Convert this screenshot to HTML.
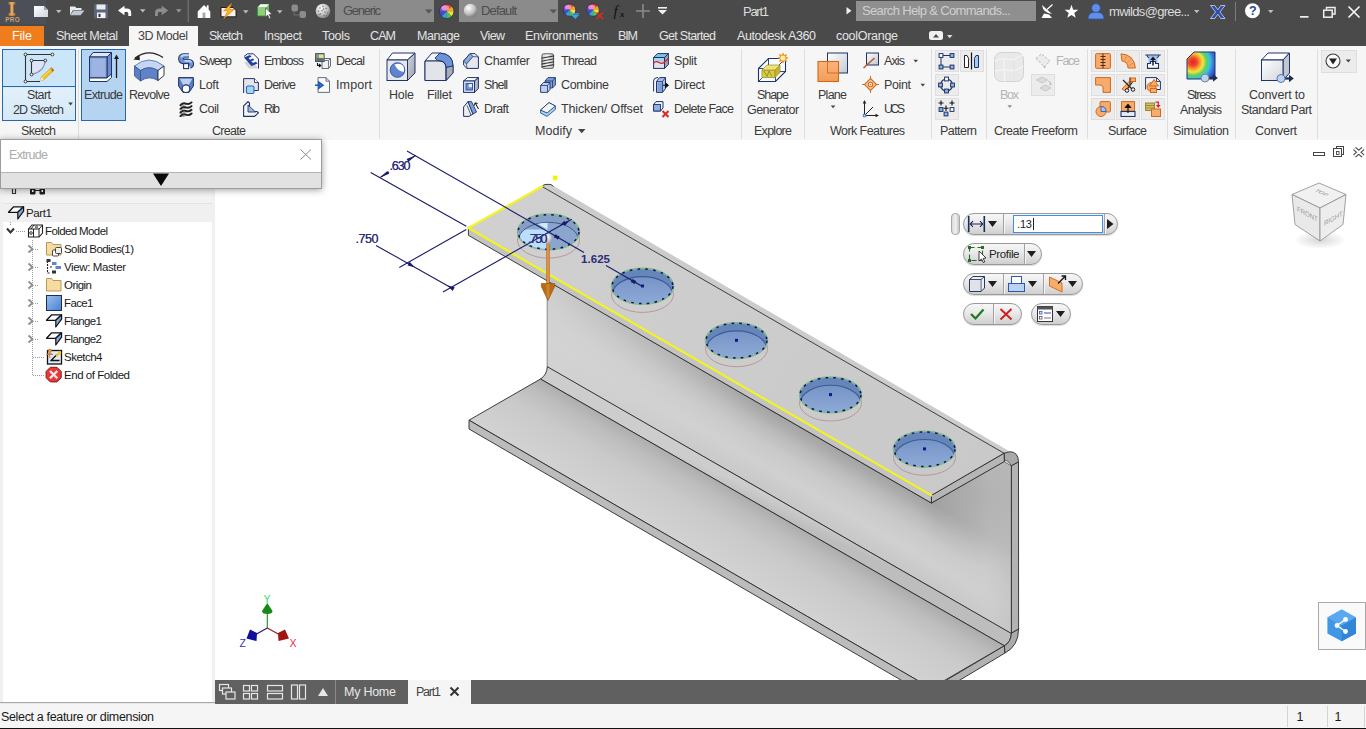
<!DOCTYPE html>
<html><head><meta charset="utf-8"><title>Autodesk Inventor - Part1</title>
<style>
html,body{margin:0;padding:0;background:#fff;}
body{width:1366px;height:729px;overflow:hidden;position:relative;font-family:"Liberation Sans",sans-serif;}
.a{position:absolute;display:block;}
.t{position:absolute;white-space:nowrap;}
</style></head><body>
<div class="a" style="left:0px;top:0px;width:1366px;height:46px;background:#4a4a4a;"></div>
<div class="a" style="left:335px;top:0px;width:99px;height:22px;background:#8b8b8b;"></div>
<div class="a" style="left:459px;top:0px;width:99px;height:22px;background:#8b8b8b;"></div>
<span class="t" style="left:343.0px;top:2.3px;font-size:13px;line-height:17px;color:#4d4d4d;letter-spacing:-1.25px;">Generic</span>
<span class="t" style="left:481.0px;top:2.3px;font-size:13px;line-height:17px;color:#4d4d4d;letter-spacing:-0.86px;">Default</span>
<span class="t" style="left:743.0px;top:2.5px;font-size:13px;line-height:17px;color:#dcdcdc;letter-spacing:-1.27px;">Part1</span>
<div class="a" style="left:856px;top:1px;width:180px;height:20px;background:#8f8f8f;"></div>
<span class="t" style="left:862.0px;top:2.1px;font-size:13px;line-height:17px;color:#cfcfcf;letter-spacing:-0.66px;">Search Help &amp; Commands...</span>
<span class="t" style="left:1109.0px;top:2.5px;font-size:13px;line-height:17px;color:#dcdcdc;letter-spacing:-0.68px;">mwilds@gree...</span>
<svg class="a" style="left:0px;top:0px;" width="1366" height="46" viewBox="0 0 1366 46"><defs>
<linearGradient id="gDoc" x1="0" y1="0" x2="1" y2="1"><stop offset="0" stop-color="#ffffff"/><stop offset="1" stop-color="#cfd3dc"/></linearGradient>
<linearGradient id="gLogo" x1="0" y1="0" x2="1" y2="0"><stop offset="0" stop-color="#b8722c"/><stop offset="0.5" stop-color="#f0b060"/><stop offset="1" stop-color="#b06a28"/></linearGradient>
<radialGradient id="gSph" cx="0.35" cy="0.3" r="0.8"><stop offset="0" stop-color="#ffffff"/><stop offset="0.6" stop-color="#bdbdbd"/><stop offset="1" stop-color="#6a6a6a"/></radialGradient>
</defs>
<rect x="0" y="0" width="46" height="24" fill="#4c4f58"/>
<path d="M8.500,2 H15.300 V4.500 H13.500 V13 H15.300 V15.800 H8.500 V13 H10.300 V4.500 H8.500 Z" fill="url(#gLogo)"/>
<text x="5.300" y="22.200" font-size="6.400" font-weight="bold" fill="#c9a468" font-family="Liberation Sans,sans-serif" letter-spacing="0.300">PRO</text>
<path d="M34,6 H44 L48,10 V17 H34 Z" fill="url(#gDoc)"/><path d="M44,6 L48,10 H44 Z" fill="#9aa0ae"/>
<polygon points="56,10 61.5,10 58.75,13.3" fill="#bdbdbd"/>
<path d="M70,6.500 H75 L76.500,8 H81.500 V10 H73 L70,15 Z" fill="#e8ebf0"/><path d="M73.500,10.500 H84.500 L80.500,15.300 H70.300 Z" fill="#c3c8d2"/>
<rect x="94" y="4" width="14" height="14.500" rx="1" fill="#5b6478"/><rect x="96.500" y="4.500" width="9" height="5" fill="#e9ebf0"/><rect x="97" y="12.500" width="8.500" height="5.500" fill="#f4f4f6"/><rect x="98.500" y="13.800" width="2" height="3.200" fill="#2c3344"/>
<path d="M118,10.500 L124.500,5.800 V8.600 H126.500 Q131.200,8.600 131.200,13 V16 H128.300 V13.400 Q128.300,12 126.500,12 H124.500 V15.200 Z" fill="#ffffff"/>
<polygon points="140,9.2 145.5,9.2 142.75,12.5" fill="#bdbdbd"/>
<path d="M168.200,10.500 L161.700,5.800 V8.600 H159.700 Q155,8.600 155,13 V16 H157.900 V13.400 Q157.900,12 159.700,12 H161.700 V15.200 Z" fill="#8c8c8c"/>
<polygon points="176,9.2 181.5,9.2 178.75,12.5" fill="#9a9a9a"/>
<rect x="187.700" y="0" width="1" height="22" fill="#7c7c7c"/>
<path d="M197.700,11.500 L204,5 L206.800,7.800 V5.200 H208.600 V9.600 L210.300,11.500 V18 H197.700 Z" fill="#ffffff"/><rect x="202.600" y="12.600" width="2.800" height="5.400" fill="#a8a8a8"/>
<path d="M221,7.500 H233 L236,10.500 V16.800 H221 Z" fill="#fdf1ee" stroke="#111" stroke-width="0.900"/><path d="M231.500,3.500 L223.500,10.800 H228 L223.800,18.500 L234.200,9.500 H229.200 Z" fill="#f6b928" stroke="#d88412" stroke-width="0.700"/>
<polygon points="243,10.3 248.5,10.3 245.75,13.6" fill="#bdbdbd"/>
<path d="M257.500,7.500 L260.500,4.300 H269 V13 L266,16 H257.500 Z" fill="#6dbb5a"/><path d="M257.500,7.500 H266 V16 H257.500 Z" fill="#8fd07c" stroke="#2e8a2e" stroke-width="0.800"/><path d="M260.500,4.300 H269 L266,7.500 H257.500 Z" fill="#f2fbef"/><path d="M265.500,8 V17 L267.700,15 L269.300,18.700 L270.800,18 L269.200,14.500 L272,14.300 Z" fill="#fff" stroke="#333" stroke-width="0.500"/>
<polygon points="277,10.3 282.5,10.3 279.75,13.6" fill="#bdbdbd"/>
<rect x="291.500" y="4.500" width="6.500" height="7" rx="2" fill="#8b8b8b"/><rect x="299.500" y="11" width="6.500" height="7" rx="2" fill="#8b8b8b"/><path d="M294,11.500 V15 H299.500" stroke="#6e6e6e" stroke-width="1" fill="none"/>
<circle cx="323" cy="11" r="7.300" fill="url(#gSph)"/>
<circle cx="320" cy="8" r="0.750" fill="#777"/>
<circle cx="323" cy="6.5" r="0.750" fill="#777"/>
<circle cx="326" cy="8.5" r="0.750" fill="#777"/>
<circle cx="318.5" cy="11" r="0.750" fill="#777"/>
<circle cx="322" cy="10.5" r="0.750" fill="#777"/>
<circle cx="325" cy="12" r="0.750" fill="#777"/>
<circle cx="327.5" cy="13" r="0.750" fill="#777"/>
<circle cx="320.5" cy="14" r="0.750" fill="#777"/>
<circle cx="324" cy="15.5" r="0.750" fill="#777"/>
<circle cx="326.5" cy="15.5" r="0.750" fill="#777"/>
<circle cx="319" cy="14.5" r="0.750" fill="#777"/>
<circle cx="323.5" cy="9" r="0.750" fill="#777"/>
<polygon points="425,9.500 432.500,9.500 428.750,13.500" fill="#565656"/>
<polygon points="549.500,9.500 557,9.500 553.250,13.500" fill="#565656"/>
<path d="M446.70,11.30 L446.70,4.00 A7.3,7.3 0 0 1 451.86,6.14 Z" fill="#e8432e"/><path d="M446.70,11.30 L451.86,6.14 A7.3,7.3 0 0 1 454.00,11.30 Z" fill="#f2a32c"/><path d="M446.70,11.30 L454.00,11.30 A7.3,7.3 0 0 1 451.86,16.46 Z" fill="#f0e040"/><path d="M446.70,11.30 L451.86,16.46 A7.3,7.3 0 0 1 446.70,18.60 Z" fill="#58c050"/><path d="M446.70,11.30 L446.70,18.60 A7.3,7.3 0 0 1 441.54,16.46 Z" fill="#3aa0e0"/><path d="M446.70,11.30 L441.54,16.46 A7.3,7.3 0 0 1 439.40,11.30 Z" fill="#3d4fd0"/><path d="M446.70,11.30 L439.40,11.30 A7.3,7.3 0 0 1 441.54,6.14 Z" fill="#9a3fd0"/><path d="M446.70,11.30 L441.54,6.14 A7.3,7.3 0 0 1 446.70,4.00 Z" fill="#e040a0"/><circle cx="446.7" cy="11.3" r="7.3" fill="none" stroke="#2e2e4e" stroke-width="0.800"/><ellipse cx="445.24" cy="8.015" rx="4.015" ry="2.555" fill="#fff" opacity="0.450"/>
<circle cx="470.500" cy="10.500" r="6.700" fill="url(#gSph)"/>
<path d="M569.50,10.00 L569.50,3.70 A6.3,6.3 0 0 1 573.95,5.55 Z" fill="#e8432e"/><path d="M569.50,10.00 L573.95,5.55 A6.3,6.3 0 0 1 575.80,10.00 Z" fill="#f2a32c"/><path d="M569.50,10.00 L575.80,10.00 A6.3,6.3 0 0 1 573.95,14.45 Z" fill="#f0e040"/><path d="M569.50,10.00 L573.95,14.45 A6.3,6.3 0 0 1 569.50,16.30 Z" fill="#58c050"/><path d="M569.50,10.00 L569.50,16.30 A6.3,6.3 0 0 1 565.05,14.45 Z" fill="#3aa0e0"/><path d="M569.50,10.00 L565.05,14.45 A6.3,6.3 0 0 1 563.20,10.00 Z" fill="#3d4fd0"/><path d="M569.50,10.00 L563.20,10.00 A6.3,6.3 0 0 1 565.05,5.55 Z" fill="#9a3fd0"/><path d="M569.50,10.00 L565.05,5.55 A6.3,6.3 0 0 1 569.50,3.70 Z" fill="#e040a0"/><circle cx="569.5" cy="10" r="6.3" fill="none" stroke="#2e2e4e" stroke-width="0.800"/><ellipse cx="568.24" cy="7.165" rx="3.465" ry="2.205" fill="#fff" opacity="0.450"/>
<polygon points="571.500,15 579,15 575.250,19" fill="#38a8f0"/><rect x="571.500" y="13.300" width="7.500" height="1.200" fill="#38a8f0"/>
<path d="M593.00,10.00 L593.00,3.70 A6.3,6.3 0 0 1 597.45,5.55 Z" fill="#e8432e"/><path d="M593.00,10.00 L597.45,5.55 A6.3,6.3 0 0 1 599.30,10.00 Z" fill="#f2a32c"/><path d="M593.00,10.00 L599.30,10.00 A6.3,6.3 0 0 1 597.45,14.45 Z" fill="#f0e040"/><path d="M593.00,10.00 L597.45,14.45 A6.3,6.3 0 0 1 593.00,16.30 Z" fill="#58c050"/><path d="M593.00,10.00 L593.00,16.30 A6.3,6.3 0 0 1 588.55,14.45 Z" fill="#3aa0e0"/><path d="M593.00,10.00 L588.55,14.45 A6.3,6.3 0 0 1 586.70,10.00 Z" fill="#3d4fd0"/><path d="M593.00,10.00 L586.70,10.00 A6.3,6.3 0 0 1 588.55,5.55 Z" fill="#9a3fd0"/><path d="M593.00,10.00 L588.55,5.55 A6.3,6.3 0 0 1 593.00,3.70 Z" fill="#e040a0"/><circle cx="593" cy="10" r="6.3" fill="none" stroke="#2e2e4e" stroke-width="0.800"/><ellipse cx="591.74" cy="7.165" rx="3.465" ry="2.205" fill="#fff" opacity="0.450"/>
<path d="M596.500,12.500 L603,19 M603,12.500 L596.500,19" stroke="#e8281c" stroke-width="1.500"/>
<text x="613.500" y="15.500" font-size="15" font-style="italic" font-family="Liberation Serif,serif" fill="#111">f</text><text x="620" y="17" font-size="9" font-style="italic" font-weight="bold" font-family="Liberation Serif,serif" fill="#111">x</text>
<path d="M643,4 V18 M636,11 H650" stroke="#8a8a8a" stroke-width="1.600"/>
<rect x="658" y="7" width="9" height="1.600" fill="#f0f0f0"/><polygon points="658,10 667,10 662.500,14.500" fill="#f0f0f0"/>
<polygon points="846.500,7 851.500,10.800 846.500,14.500" fill="#f0f0f0"/>
<path d="M1042,5 Q1043,13 1052,14 Z" fill="#fff"/><path d="M1047,9.500 L1052.500,4.500" stroke="#fff" stroke-width="1.200"/><path d="M1044,13.500 L1041.500,18 H1052 L1049,14.500" fill="#fff"/>
<polygon points="1071.50,4.80 1073.20,9.65 1078.35,9.78 1074.26,12.90 1075.73,17.82 1071.50,14.90 1067.27,17.82 1068.74,12.90 1064.65,9.78 1069.80,9.65" fill="#ffffff"/>
<circle cx="1096" cy="8" r="4.300" fill="#5f8fe6" stroke="#2f55b0" stroke-width="0.700"/><path d="M1088,19 Q1088.500,12.500 1093.500,12.500 H1098.500 Q1103.500,12.500 1104,19 Z" fill="#5f8fe6" stroke="#2f55b0" stroke-width="0.700"/>
<polygon points="1194,10 1199.5,10 1196.75,13.3" fill="#bdbdbd"/>
<path d="M1210.500,5.500 H1214.800 L1217.800,9.800 L1220.800,5.500 H1225 L1220,12 L1225,18.500 H1220.800 L1217.800,14.200 L1214.800,18.500 H1210.500 L1215.600,12 Z" fill="#2f4fa8" stroke="#c9d8f4" stroke-width="0.800"/>
<rect x="1235" y="2" width="1" height="19" fill="#7c7c7c"/>
<circle cx="1252.500" cy="10.700" r="7.500" fill="#ffffff"/><text x="1249" y="15.300" font-size="12.500" font-weight="bold" font-family="Liberation Sans,sans-serif" fill="#2a3f9a">?</text>
<polygon points="1268,10 1273.5,10 1270.75,13.3" fill="#bdbdbd"/>
<rect x="1300" y="16" width="8.500" height="1.700" fill="#f0f0f0"/>
<path d="M1326.500,9.500 V7.500 H1335 V14 H1332.500" fill="none" stroke="#f0f0f0" stroke-width="1.500"/><rect x="1323.700" y="10.200" width="8.500" height="7" fill="none" stroke="#f0f0f0" stroke-width="1.500"/>
<path d="M1348.500,6.500 L1359.500,17.500 M1359.500,6.500 L1348.500,17.500" stroke="#f4f4f4" stroke-width="1.700"/>
<rect x="929" y="31" width="14" height="9" rx="2.500" fill="#f0f0f0"/><polygon points="933,37.500 939,37.500 936,34" fill="#4a4a4a"/><polygon points="947,35 952.500,35 949.750,38.300" fill="#e0e0e0"/></svg>
<div class="a" style="left:0px;top:26px;width:44px;height:20px;background:#f07d1c;"></div>
<div class="a" style="left:129px;top:26px;width:69px;height:21px;background:#f6f6f6;"></div>
<span class="t" style="left:12.0px;top:28.2px;font-size:12.5px;line-height:16px;color:#fff;letter-spacing:-0.05px;">File</span>
<span class="t" style="left:56.0px;top:28.2px;font-size:12.5px;line-height:16px;color:#e4e4e4;letter-spacing:-0.47px;">Sheet Metal</span>
<span class="t" style="left:138.0px;top:28.2px;font-size:12.5px;line-height:16px;color:#444;letter-spacing:-0.50px;">3D Model</span>
<span class="t" style="left:209.0px;top:28.2px;font-size:12.5px;line-height:16px;color:#e4e4e4;letter-spacing:-0.84px;">Sketch</span>
<span class="t" style="left:264.0px;top:28.2px;font-size:12.5px;line-height:16px;color:#e4e4e4;letter-spacing:-0.38px;">Inspect</span>
<span class="t" style="left:322.0px;top:28.2px;font-size:12.5px;line-height:16px;color:#e4e4e4;letter-spacing:-0.29px;">Tools</span>
<span class="t" style="left:370.0px;top:28.2px;font-size:12.5px;line-height:16px;color:#e4e4e4;letter-spacing:-0.89px;">CAM</span>
<span class="t" style="left:417.0px;top:28.2px;font-size:12.5px;line-height:16px;color:#e4e4e4;letter-spacing:-0.43px;">Manage</span>
<span class="t" style="left:480.0px;top:28.2px;font-size:12.5px;line-height:16px;color:#e4e4e4;letter-spacing:-0.62px;">View</span>
<span class="t" style="left:525.0px;top:28.2px;font-size:12.5px;line-height:16px;color:#e4e4e4;letter-spacing:-0.31px;">Environments</span>
<span class="t" style="left:618.0px;top:28.2px;font-size:12.5px;line-height:16px;color:#e4e4e4;letter-spacing:-1.11px;">BIM</span>
<span class="t" style="left:659.0px;top:28.2px;font-size:12.5px;line-height:16px;color:#e4e4e4;letter-spacing:-0.69px;">Get Started</span>
<span class="t" style="left:737.0px;top:28.2px;font-size:12.5px;line-height:16px;color:#e4e4e4;letter-spacing:-0.42px;">Autodesk A360</span>
<span class="t" style="left:836.0px;top:28.2px;font-size:12.5px;line-height:16px;color:#e4e4e4;letter-spacing:-0.29px;">coolOrange</span>
<div class="a" style="left:0px;top:46px;width:1366px;height:94px;background:#f6f6f6;"></div>
<div class="a" style="left:78px;top:49px;width:1px;height:90px;background:#dedede;"></div>
<div class="a" style="left:379px;top:49px;width:1px;height:90px;background:#dedede;"></div>
<div class="a" style="left:741px;top:49px;width:1px;height:90px;background:#dedede;"></div>
<div class="a" style="left:804px;top:49px;width:1px;height:90px;background:#dedede;"></div>
<div class="a" style="left:931px;top:49px;width:1px;height:90px;background:#dedede;"></div>
<div class="a" style="left:986px;top:49px;width:1px;height:90px;background:#dedede;"></div>
<div class="a" style="left:1087px;top:49px;width:1px;height:90px;background:#dedede;"></div>
<div class="a" style="left:1167px;top:49px;width:1px;height:90px;background:#dedede;"></div>
<div class="a" style="left:1235px;top:49px;width:1px;height:90px;background:#dedede;"></div>
<div class="a" style="left:1317px;top:49px;width:1px;height:90px;background:#dedede;"></div>
<div class="a" style="left:2px;top:49px;width:74px;height:72px;background:linear-gradient(#cbe5f9 0,#cbe5f9 37px,#e3f0fb 38px,#d4e8f8 100%);border:1px solid #2768ac;box-sizing:border-box;"></div>
<div class="a" style="left:3px;top:86px;width:72px;height:1px;background:#2768ac;"></div>
<div class="a" style="left:81px;top:49px;width:45px;height:72px;background:#b5d4f1;border:1px solid #2768ac;box-sizing:border-box;"></div>
<span class="t" style="left:199.0px;top:53.2px;font-size:12.5px;line-height:16px;color:#3a3a3a;letter-spacing:-1.30px;">Sweep</span>
<span class="t" style="left:199.0px;top:77.2px;font-size:12.5px;line-height:16px;color:#3a3a3a;letter-spacing:-0.28px;">Loft</span>
<span class="t" style="left:199.0px;top:101.2px;font-size:12.5px;line-height:16px;color:#3a3a3a;letter-spacing:-0.51px;">Coil</span>
<span class="t" style="left:264.0px;top:53.2px;font-size:12.5px;line-height:16px;color:#3a3a3a;letter-spacing:-1.03px;">Emboss</span>
<span class="t" style="left:264.0px;top:77.2px;font-size:12.5px;line-height:16px;color:#3a3a3a;letter-spacing:-0.82px;">Derive</span>
<span class="t" style="left:264.0px;top:101.2px;font-size:12.5px;line-height:16px;color:#3a3a3a;letter-spacing:-1.38px;">Rib</span>
<span class="t" style="left:336.0px;top:53.2px;font-size:12.5px;line-height:16px;color:#3a3a3a;letter-spacing:-0.74px;">Decal</span>
<span class="t" style="left:336.0px;top:77.2px;font-size:12.5px;line-height:16px;color:#3a3a3a;letter-spacing:0.12px;">Import</span>
<span class="t" style="left:484.0px;top:53.2px;font-size:12.5px;line-height:16px;color:#3a3a3a;letter-spacing:-0.32px;">Chamfer</span>
<span class="t" style="left:484.0px;top:77.2px;font-size:12.5px;line-height:16px;color:#3a3a3a;letter-spacing:-0.95px;">Shell</span>
<span class="t" style="left:484.0px;top:101.2px;font-size:12.5px;line-height:16px;color:#3a3a3a;letter-spacing:-0.52px;">Draft</span>
<span class="t" style="left:561.0px;top:53.2px;font-size:12.5px;line-height:16px;color:#3a3a3a;letter-spacing:-0.72px;">Thread</span>
<span class="t" style="left:561.0px;top:77.2px;font-size:12.5px;line-height:16px;color:#3a3a3a;letter-spacing:-0.34px;">Combine</span>
<span class="t" style="left:561.0px;top:101.2px;font-size:12.5px;line-height:16px;color:#3a3a3a;letter-spacing:-0.13px;">Thicken/ Offset</span>
<span class="t" style="left:674.0px;top:53.2px;font-size:12.5px;line-height:16px;color:#3a3a3a;letter-spacing:-0.33px;">Split</span>
<span class="t" style="left:674.0px;top:77.2px;font-size:12.5px;line-height:16px;color:#3a3a3a;letter-spacing:-0.33px;">Direct</span>
<span class="t" style="left:674.0px;top:101.2px;font-size:12.5px;line-height:16px;color:#3a3a3a;letter-spacing:-0.74px;">Delete Face</span>
<span class="t" style="left:884.0px;top:53.2px;font-size:12.5px;line-height:16px;color:#3a3a3a;letter-spacing:-0.87px;">Axis</span>
<span class="t" style="left:884.0px;top:77.2px;font-size:12.5px;line-height:16px;color:#3a3a3a;letter-spacing:-0.37px;">Point</span>
<span class="t" style="left:884.0px;top:101.2px;font-size:12.5px;line-height:16px;color:#3a3a3a;letter-spacing:-2.70px;">UCS</span>
<span class="t" style="left:1056.0px;top:53.2px;font-size:12.5px;line-height:16px;color:#b4b4b4;letter-spacing:-1.26px;">Face</span>
<span class="t" style="left:84.0px;top:87.2px;font-size:12.5px;line-height:16px;color:#3a3a3a;letter-spacing:-0.68px;">Extrude</span>
<span class="t" style="left:129.0px;top:87.2px;font-size:12.5px;line-height:16px;color:#3a3a3a;letter-spacing:-0.69px;">Revolve</span>
<span class="t" style="left:389.0px;top:87.2px;font-size:12.5px;line-height:16px;color:#3a3a3a;letter-spacing:-0.24px;">Hole</span>
<span class="t" style="left:427.0px;top:87.2px;font-size:12.5px;line-height:16px;color:#3a3a3a;letter-spacing:-0.28px;">Fillet</span>
<span class="t" style="left:27.0px;top:87.2px;font-size:12.5px;line-height:16px;color:#3a3a3a;letter-spacing:-0.60px;">Start</span>
<span class="t" style="left:13.0px;top:102.2px;font-size:12.5px;line-height:16px;color:#3a3a3a;letter-spacing:-0.83px;">2D Sketch</span>
<span class="t" style="left:757.0px;top:87.2px;font-size:12.5px;line-height:16px;color:#3a3a3a;letter-spacing:-1.04px;">Shape</span>
<span class="t" style="left:747.0px;top:102.2px;font-size:12.5px;line-height:16px;color:#3a3a3a;letter-spacing:-0.53px;">Generator</span>
<span class="t" style="left:818.0px;top:87.2px;font-size:12.5px;line-height:16px;color:#3a3a3a;letter-spacing:-0.74px;">Plane</span>
<span class="t" style="left:1187.0px;top:87.2px;font-size:12.5px;line-height:16px;color:#3a3a3a;letter-spacing:-1.28px;">Stress</span>
<span class="t" style="left:1180.0px;top:102.2px;font-size:12.5px;line-height:16px;color:#3a3a3a;letter-spacing:-0.65px;">Analysis</span>
<span class="t" style="left:1249.0px;top:87.2px;font-size:12.5px;line-height:16px;color:#3a3a3a;letter-spacing:-0.19px;">Convert to</span>
<span class="t" style="left:1241.0px;top:102.2px;font-size:12.5px;line-height:16px;color:#3a3a3a;letter-spacing:-0.51px;">Standard Part</span>
<span class="t" style="left:1000.0px;top:87.2px;font-size:12.5px;line-height:16px;color:#b4b4b4;letter-spacing:-1.27px;">Box</span>
<span class="t" style="left:21.0px;top:123.2px;font-size:12.5px;line-height:16px;color:#3a3a3a;letter-spacing:-0.64px;">Sketch</span>
<span class="t" style="left:212.0px;top:123.2px;font-size:12.5px;line-height:16px;color:#3a3a3a;letter-spacing:-0.70px;">Create</span>
<span class="t" style="left:535.0px;top:123.2px;font-size:12.5px;line-height:16px;color:#3a3a3a;letter-spacing:0.04px;">Modify</span>
<span class="t" style="left:754.0px;top:123.2px;font-size:12.5px;line-height:16px;color:#3a3a3a;letter-spacing:-0.73px;">Explore</span>
<span class="t" style="left:830.0px;top:123.2px;font-size:12.5px;line-height:16px;color:#3a3a3a;letter-spacing:-0.56px;">Work Features</span>
<span class="t" style="left:940.0px;top:123.2px;font-size:12.5px;line-height:16px;color:#3a3a3a;letter-spacing:-0.55px;">Pattern</span>
<span class="t" style="left:994.0px;top:123.2px;font-size:12.5px;line-height:16px;color:#3a3a3a;letter-spacing:-0.55px;">Create Freeform</span>
<span class="t" style="left:1108.0px;top:123.2px;font-size:12.5px;line-height:16px;color:#3a3a3a;letter-spacing:-0.68px;">Surface</span>
<span class="t" style="left:1173.0px;top:123.2px;font-size:12.5px;line-height:16px;color:#3a3a3a;letter-spacing:-0.26px;">Simulation</span>
<span class="t" style="left:1255.0px;top:123.2px;font-size:12.5px;line-height:16px;color:#3a3a3a;letter-spacing:-0.29px;">Convert</span>
<div class="a" style="left:935px;top:50px;width:24px;height:22px;background:#ececec;border:1px solid #dedede;box-sizing:border-box;"></div>
<div class="a" style="left:960px;top:50px;width:24px;height:22px;background:#ececec;border:1px solid #dedede;box-sizing:border-box;"></div>
<div class="a" style="left:935px;top:74px;width:24px;height:22px;background:#ececec;border:1px solid #dedede;box-sizing:border-box;"></div>
<div class="a" style="left:935px;top:98px;width:24px;height:22px;background:#ececec;border:1px solid #dedede;box-sizing:border-box;"></div>
<div class="a" style="left:1031px;top:74px;width:24px;height:22px;background:#ececec;border:1px solid #dedede;box-sizing:border-box;"></div>
<div class="a" style="left:1091px;top:50px;width:24px;height:22px;background:#ececec;border:1px solid #dedede;box-sizing:border-box;"></div>
<div class="a" style="left:1091px;top:74px;width:24px;height:22px;background:#ececec;border:1px solid #dedede;box-sizing:border-box;"></div>
<div class="a" style="left:1091px;top:98px;width:24px;height:22px;background:#ececec;border:1px solid #dedede;box-sizing:border-box;"></div>
<div class="a" style="left:1116px;top:50px;width:24px;height:22px;background:#ececec;border:1px solid #dedede;box-sizing:border-box;"></div>
<div class="a" style="left:1116px;top:74px;width:24px;height:22px;background:#ececec;border:1px solid #dedede;box-sizing:border-box;"></div>
<div class="a" style="left:1116px;top:98px;width:24px;height:22px;background:#ececec;border:1px solid #dedede;box-sizing:border-box;"></div>
<div class="a" style="left:1141px;top:50px;width:24px;height:22px;background:#ececec;border:1px solid #dedede;box-sizing:border-box;"></div>
<div class="a" style="left:1141px;top:74px;width:24px;height:22px;background:#ececec;border:1px solid #dedede;box-sizing:border-box;"></div>
<div class="a" style="left:1141px;top:98px;width:24px;height:22px;background:#ececec;border:1px solid #dedede;box-sizing:border-box;"></div>
<div class="a" style="left:1321px;top:50px;width:36px;height:23px;background:#ececec;border:1px solid #dedede;box-sizing:border-box;"></div>
<svg class="a" style="left:22px;top:50px;" width="36" height="36" viewBox="0 0 36 36"><path d="M30.400,4.500 H3.500 V31.500 H18" fill="none" stroke="#333" stroke-width="1.100"/><path d="M9.500,10.500 H23.300 Q22,22 9.500,24.500 Z" fill="#dfe2f6" stroke="none"/><path d="M23.300,10.500 H9.500 V24.500" fill="none" stroke="#333" stroke-width="1.100"/><path d="M23.300,10.500 Q22,22 9.500,24.500" fill="none" stroke="#7d8cb4" stroke-width="1.100"/><circle cx="3.5" cy="4.5" r="1.400" fill="#fff" stroke="#222" stroke-width="0.900"/><circle cx="30.4" cy="4.5" r="1.400" fill="#fff" stroke="#222" stroke-width="0.900"/><circle cx="3.5" cy="31.5" r="1.400" fill="#fff" stroke="#222" stroke-width="0.900"/><circle cx="9.5" cy="10.5" r="1.400" fill="#fff" stroke="#222" stroke-width="0.900"/><circle cx="23.3" cy="10.5" r="1.400" fill="#fff" stroke="#222" stroke-width="0.900"/><circle cx="9.5" cy="24.5" r="1.400" fill="#fff" stroke="#222" stroke-width="0.900"/><path d="M18,31 L19.200,27 L29.500,17.500 L32,20.300 L21.800,29.800 Z" fill="#f5c020" stroke="#c08a10" stroke-width="0.500"/><path d="M18,31 L19.200,27 L21.800,29.800 Z" fill="#f4e8d0"/><path d="M28,19 L29.500,17.500 L32,20.300 L30.500,21.700 Z" fill="#b06a20"/><path d="M20,27.800 L30,18.600" stroke="#fbe07a" stroke-width="1"/></svg>
<svg class="a" style="left:66px;top:101px;" width="8" height="5" viewBox="0 0 8 5"><polygon points="2.3,1.6 6.9,1.6 4.6,4.4" fill="#444"/></svg>
<svg class="a" style="left:86px;top:50px;" width="36" height="34" viewBox="0 0 36 34"><polygon points="3.500,7 7,2.500 25.500,2.500 21,7" fill="#dfe8f8" stroke="#1f3468" stroke-width="1"/><polygon points="21,7 25.500,2.500 25.500,24 21,28" fill="#6f8bd0" stroke="#1f3468" stroke-width="1"/><rect x="3.500" y="7" width="17.500" height="21" fill="#8fa8dc" stroke="#1f3468" stroke-width="1"/><polygon points="3.500,28 21,28 25.500,24 25.500,27.500 21,31.500 3.500,31.500" fill="#fff" stroke="#1f3468" stroke-width="1"/><rect x="5.500" y="9" width="13.500" height="17.500" fill="#9db3e2"/><path d="M30.500,28 V7" stroke="#1a1a1a" stroke-width="1.300"/><polygon points="30.500,4.500 33,9 28,9" fill="#1a1a1a"/></svg>
<svg class="a" style="left:131px;top:50px;" width="36" height="34" viewBox="0 0 36 34"><path d="M32,7.500 Q18,-2 4,8" fill="none" stroke="#222" stroke-width="1.300"/><polygon points="2.300,9.500 8.500,5 8.800,10.300" fill="#222"/><path d="M3.500,16 Q18,4 33,16 L27,20.500 Q18,15 9.500,20.500 Z" fill="#c4d6f2" stroke="#4a68a8" stroke-width="0.800"/><path d="M3.500,16 L9.500,20.500 V31 L3.500,26 Z" fill="#5a7ec4" stroke="#36508c" stroke-width="0.800"/><path d="M9.500,20.500 Q18,15 27,20.500 V30.500 Q18,25 9.500,31 Z" fill="#5f82c8" stroke="#36508c" stroke-width="0.800"/><path d="M27,20.500 L33,16 V25.500 L27,30.500 Z" fill="#fff" stroke="#222" stroke-width="0.900"/></svg>
<svg class="a" style="left:177.5px;top:52.5px;" width="16" height="17" viewBox="0 0 16 17"><path d="M10.800,2.900 H6.500 Q2.800,2.900 2.800,5.800 Q2.800,8.600 6.500,8.600 H10 Q13.400,8.600 13.400,11 Q13.400,12.600 11.800,13.200" fill="none" stroke="#1f3468" stroke-width="5.400" stroke-linecap="butt"/><path d="M10.800,2.900 H6.500 Q2.800,2.900 2.800,5.800 Q2.800,8.600 6.500,8.600 H10 Q13.400,8.600 13.400,11 Q13.400,12.600 11.800,13.200" fill="none" stroke="#6f90d4" stroke-width="3.600" stroke-linecap="butt"/><path d="M10.800,2.200 H6.500 Q3.600,2.200 3.400,4.500 M6.500,7.900 H10 Q12.800,7.900 13.200,9.500" fill="none" stroke="#c0d4f4" stroke-width="1.700"/><rect x="5.600" y="10.600" width="5" height="5" fill="#fff" stroke="#1f3468" stroke-width="1.100"/></svg>
<svg class="a" style="left:178px;top:77px;" width="16" height="16" viewBox="0 0 16 16"><path d="M0.600,0.600 H15.400 V9 L11,15.400 H5 L0.600,9 Z" fill="#5a7ec4" stroke="#1f3468" stroke-width="1"/><path d="M1.800,1.800 H14.200 L10,9.500 H6 Z" fill="#bcd0f2"/><circle cx="8" cy="11.700" r="3.800" fill="#fff" stroke="#1f3468" stroke-width="1.100"/></svg>
<svg class="a" style="left:179px;top:101px;" width="14" height="16" viewBox="0 0 14 16"><path d="M12.600,1.4 L1.400,5.4" fill="none" stroke="#9a9a9a" stroke-width="1"/><path d="M12.600,5.1 L1.400,9.1" fill="none" stroke="#9a9a9a" stroke-width="1"/><path d="M12.600,8.8 L1.400,12.8" fill="none" stroke="#9a9a9a" stroke-width="1"/><path d="M12.600,12.5 L1.400,16.5" fill="none" stroke="#9a9a9a" stroke-width="1"/><path d="M1.400,4.1 Q4,1.4 7,2.6 T12.600,1.4" fill="none" stroke="#242424" stroke-width="1.900" stroke-linecap="round"/><path d="M1.400,7.8 Q4,5.1 7,6.3 T12.600,5.1" fill="none" stroke="#242424" stroke-width="1.900" stroke-linecap="round"/><path d="M1.400,11.5 Q4,8.8 7,10 T12.600,8.8" fill="none" stroke="#242424" stroke-width="1.900" stroke-linecap="round"/><path d="M1.400,15.2 Q4,12.5 7,13.7 T12.600,12.5" fill="none" stroke="#242424" stroke-width="1.900" stroke-linecap="round"/></svg>
<svg class="a" style="left:243px;top:53px;" width="16" height="16" viewBox="0 0 16 16"><path d="M1,9 H10 L15.500,15.500 H6 Z" fill="#c9c9cc" opacity="0.800"/><path d="M1,3.500 L4.500,0.800 H10.500 L15.500,6 V15.500" fill="none" stroke="#1f3468" stroke-width="1"/><path d="M1,4.500 L7,2 L8.500,3.700 L5.500,5 L7,6.700 L10,5.500 L11.300,7 L8.300,8.300 L9.800,10 L13,8.700 L14.500,10.500 L8.500,13 Z" fill="#1e3f9c"/></svg>
<svg class="a" style="left:243px;top:78px;" width="16" height="16" viewBox="0 0 16 16"><path d="M0.600,15 V0.600 H11.500 L15.400,4.500 V12.500 H11" fill="#e4e5ea" stroke="#1f3468" stroke-width="1"/><path d="M11.500,0.600 V4.500 H15.400" fill="#fff" stroke="#1f3468" stroke-width="0.900"/><rect x="3.500" y="8" width="7.500" height="7.500" rx="1.500" fill="#a6d4ee" stroke="#2f68b8" stroke-width="1.100"/></svg>
<svg class="a" style="left:243px;top:101px;" width="16" height="16" viewBox="0 0 16 16"><path d="M0.600,15.400 V5 L5,0.600 L6.500,2 V10.500 L14,10.500 L15.400,11.800 L11.500,15.400 Z" fill="#f4f5f9" stroke="#1f3468" stroke-width="1.100"/><path d="M5,4 L12.500,11 H5 Z" fill="#9fb6e6" stroke="#1f3468" stroke-width="0.900"/></svg>
<svg class="a" style="left:315px;top:53px;" width="16" height="16" viewBox="0 0 16 16"><path d="M7,7.500 L9,5.500 H15.500 V13 L13.500,15.500 H7 Z" fill="#eef0f3" stroke="#555c6c" stroke-width="0.900"/><path d="M7,7.500 H13.500 V15.500 M13.500,7.500 L15.500,5.500" fill="none" stroke="#555c6c" stroke-width="0.800"/><rect x="0.600" y="0.600" width="8.500" height="8" fill="#8c988c" stroke="#3c4454" stroke-width="0.900"/><rect x="4" y="1.500" width="4.500" height="4" fill="#d8e890"/><rect x="1.300" y="5" width="7" height="3" fill="#5c6c78"/><path d="M2.500,10 V12.500 H5.500 M4,11 L5.800,12.500 L4,14" fill="none" stroke="#111" stroke-width="1.100"/></svg>
<svg class="a" style="left:315px;top:77px;" width="16" height="16" viewBox="0 0 16 16"><path d="M3,0.600 H11 L14.500,4.200 V15.400 H3 Z" fill="#fafafc" stroke="#566074" stroke-width="0.900"/><path d="M11,0.600 V4.200 H14.500" fill="none" stroke="#566074" stroke-width="0.900"/><path d="M0,8.200 H5.500 M3.800,5.200 L8,8.200 L3.800,11.300 Z" fill="#3c8ce0" stroke="#1c5cb8" stroke-width="1.500"/></svg>
<svg class="a" style="left:386px;top:52px;" width="30" height="30" viewBox="0 0 30 30"><polygon points="1,8 6.500,1 29,1 21.500,8" fill="#fdfdfe" stroke="#1f3468" stroke-width="1"/><linearGradient id="gHr" x1="0" y1="0" x2="1" y2="1"><stop offset="0" stop-color="#d6d8de"/><stop offset="1" stop-color="#9a9ea8"/></linearGradient><polygon points="21.500,8 29,1 29,21 21.500,28.500" fill="url(#gHr)" stroke="#1f3468" stroke-width="1"/><rect x="1" y="8" width="20.500" height="20.500" fill="#e6e8ee" stroke="#1f3468" stroke-width="1"/><circle cx="11.500" cy="18" r="7.300" fill="#5f86cc" stroke="#36589c" stroke-width="1"/><path d="M8.500,12.500 Q14,10.500 17.300,14 Q18.800,17 17.800,20 Q12,19.500 8.500,12.500 Z" fill="#fff"/></svg>
<svg class="a" style="left:424px;top:52px;" width="30" height="30" viewBox="0 0 30 30"><path d="M1,9 L8,1 H16 Q29,2 29,14 V21 L22,28.500 H1 Z" fill="#f3f4f7" stroke="#1f3468" stroke-width="1"/><path d="M22,28.500 V15 Q21,9.500 16,9 H1" fill="none" stroke="#1f3468" stroke-width="0.900"/><path d="M1,9 H16 Q21,9.500 22,15 V28.500 H1 Z" fill="#e3e4e9"/><path d="M11,6 L16,1 Q29,2 29,14 L22,15.500 Q21.500,9 16,9 Q13,9 11,6 Z" fill="#6f93d8" stroke="#1f3468" stroke-width="0.900"/><path d="M22,15.500 L29,14 V21 L22,28.500 Z" fill="#a9adb8" stroke="#1f3468" stroke-width="0.900"/><path d="M1,9 H16 Q21,9.500 22,15 V28.500 H1 Z" fill="none" stroke="#1f3468" stroke-width="1"/></svg>
<svg class="a" style="left:463px;top:53px;" width="16" height="16" viewBox="0 0 16 16"><path d="M0.600,8 L7,0.600 H12 L15.400,4 V15.400 H4 L0.600,12 Z" fill="#e6e8ee" stroke="#1f3468" stroke-width="1"/><path d="M0.600,8 L7,0.600 L10,3.500 L3.500,11 Z" fill="#8aaae4" stroke="#1f3468" stroke-width="0.800"/><path d="M10,3.500 L15.400,4 M3.500,11 L4,15.400" stroke="#1f3468" stroke-width="0.700"/></svg>
<svg class="a" style="left:463px;top:77px;" width="16" height="16" viewBox="0 0 16 16"><polygon points="0.600,4 4.500,0.600 15.400,0.600 11.500,4" fill="#fff" stroke="#1f3468" stroke-width="1"/><polygon points="11.500,4 15.400,0.600 15.400,11.500 11.500,15.400" fill="#b4b8c4" stroke="#1f3468" stroke-width="1"/><rect x="0.600" y="4" width="10.900" height="11.400" fill="#dfe6f6" stroke="#1f3468" stroke-width="1"/><rect x="3" y="6.500" width="6.500" height="6.500" fill="#6f93d8" stroke="#2c4c9c" stroke-width="0.900"/><rect x="5.800" y="7" width="3.200" height="3.200" fill="#e6eefc"/></svg>
<svg class="a" style="left:463px;top:101px;" width="17" height="16" viewBox="0 0 17 16"><path d="M0.600,15.400 V6 L5,0.600 L10,13 L6,15.400 Z" fill="#eceef2" stroke="#1f3468" stroke-width="1"/><path d="M5,0.600 L8.500,0.600 L13.500,11 L10,13 Z" fill="#7f9fe0" stroke="#1f3468" stroke-width="0.900"/><path d="M4,4.500 L8,14" stroke="#1f3468" stroke-width="0.800"/><path d="M15.500,8 L12.300,2.200 M11.500,4.500 L12,1.800 L14.600,2.600" fill="none" stroke="#111" stroke-width="1"/></svg>
<svg class="a" style="left:541px;top:53px;" width="14" height="16" viewBox="0 0 14 16"><linearGradient id="gTh" x1="0" y1="0" x2="1" y2="0"><stop offset="0" stop-color="#c8c8c8"/><stop offset="0.450" stop-color="#fafafa"/><stop offset="1" stop-color="#bdbdbd"/></linearGradient><rect x="1" y="0.800" width="11.500" height="14.500" rx="1.500" fill="url(#gTh)" stroke="#4a4a4a" stroke-width="0.900"/><path d="M0.300,5.3 L13.200,2.9" stroke="#3a3a3a" stroke-width="1.100"/><path d="M0.300,8.2 L13.200,5.8" stroke="#3a3a3a" stroke-width="1.100"/><path d="M0.300,11.1 L13.200,8.7" stroke="#3a3a3a" stroke-width="1.100"/><path d="M0.300,14 L13.200,11.6" stroke="#3a3a3a" stroke-width="1.100"/></svg>
<svg class="a" style="left:540px;top:77px;" width="16" height="16" viewBox="0 0 16 16"><path d="M5,4 L8,0.600 H15.400 V8 L12.500,11 H5 Z" fill="#7f9fdc" stroke="#1f3468" stroke-width="0.900"/><path d="M5,4 H12.500 V11 M12.500,4 L15.400,0.600" fill="none" stroke="#1f3468" stroke-width="0.800"/><path d="M0.600,8.500 L3.500,5.500 H10 V12.500 L7.500,15.400 H0.600 Z" fill="#bcd0f2" stroke="#1f3468" stroke-width="0.900"/><path d="M0.600,8.500 H7.500 V15.400 M7.500,8.500 L10,5.500" fill="none" stroke="#1f3468" stroke-width="0.800"/></svg>
<svg class="a" style="left:540px;top:102px;" width="16" height="15" viewBox="0 0 16 15"><path d="M0.600,8 L9,0.600 L15.400,4 V7.500 L7,14.400 L0.600,11 Z" fill="#a8d4f0" stroke="#2c64b0" stroke-width="1"/><path d="M0.600,8 L9,0.600 L15.400,4 L7,11 Z" fill="#f2f3f5" stroke="#2c3c5c" stroke-width="0.900"/></svg>
<svg class="a" style="left:653px;top:53px;" width="16" height="16" viewBox="0 0 16 16"><polygon points="0.600,4.500 4.500,0.600 15.400,0.600 11.500,4.500" fill="#7cc4e4" stroke="#1f3468" stroke-width="1"/><polygon points="11.500,4.500 15.400,0.600 15.400,11.500 11.500,15.400" fill="#9ca4b4" stroke="#1f3468" stroke-width="1"/><rect x="0.600" y="4.500" width="10.900" height="10.900" fill="#e2e4ea" stroke="#1f3468" stroke-width="1"/><rect x="1.200" y="5" width="9.800" height="4.500" fill="#a6d4ec"/><path d="M0.600,10 Q3,7.500 6,9.500 T11.500,9 L15.400,5.500" fill="none" stroke="#d8222c" stroke-width="1.200"/></svg>
<svg class="a" style="left:653px;top:77px;" width="16" height="16" viewBox="0 0 16 16"><path d="M0.600,14.500 V4 Q0.600,1 4,0.600 H5" fill="none" stroke="#1f3468" stroke-width="1"/><path d="M3.500,4.500 L6.500,0.600 H12.500 V11.500 L9.500,15.400 H3.500 Z" fill="#a9c0ea" stroke="#1f3468" stroke-width="1"/><path d="M3.500,4.500 H9.500 V15.400 M9.500,4.500 L12.500,0.600" fill="none" stroke="#1f3468" stroke-width="0.800"/><rect x="4.500" y="5.500" width="4.500" height="9" fill="#7f9fdc"/><path d="M10,8.300 H14 M12.500,5.800 L15.500,8.300 L12.500,10.800 Z" fill="#111" stroke="#111" stroke-width="1"/></svg>
<svg class="a" style="left:653px;top:101px;" width="16" height="16.5" viewBox="0 0 16 16.5"><path d="M0.600,3.500 L3,0.600 H10 V7 L7.500,10 H0.600 Z" fill="#eef0f4" stroke="#1f3468" stroke-width="1"/><rect x="0.600" y="3.500" width="6.900" height="6.500" fill="#8fb0e4" stroke="#1f3468" stroke-width="0.900"/><path d="M9.500,10 L15.500,16 M15.500,10 L9.500,16" stroke="#d82828" stroke-width="2"/></svg>
<svg class="a" style="left:577px;top:128px;" width="10" height="6" viewBox="0 0 10 6"><polygon points="1,1 8.5,1 4.75,5.2" fill="#444"/></svg>
<svg class="a" style="left:756px;top:50px;" width="36" height="34" viewBox="0 0 36 34"><path d="M2.500,18.500 L12.500,8.500 H29.500 V21.500 L19.500,31.500 H2.500 Z" fill="#fbfbfd" stroke="#1f3468" stroke-width="1.100"/><path d="M2.500,18.500 H19.500 V31.500 M19.500,18.500 L29.500,8.500 M12.500,8.500 V21.500 H29.500 M12.500,21.500 L2.500,31.500" fill="none" stroke="#1f3468" stroke-width="0.900"/><polygon points="6,20 19,20 19,27.500 6,27.500" fill="#e6c93c" stroke="#8a9a2c" stroke-width="0.800"/><polygon points="19,20 24,15 24,22.500 19,27.500" fill="#cdb030" stroke="#8a9a2c" stroke-width="0.700"/><polygon points="6,20 11,15 24,15 19,20" fill="#f2e07c" stroke="#8a9a2c" stroke-width="0.700"/><path d="M8,21 L11,26.500 L13,21 L16,26.500" fill="none" stroke="#6a9a3a" stroke-width="0.900"/><polygon points="32.80,8.00 29.96,9.22 31.10,12.10 28.22,10.96 27.00,13.80 25.78,10.96 22.90,12.10 24.04,9.22 21.20,8.00 24.04,6.78 22.90,3.90 25.78,5.04 27.00,2.20 28.22,5.04 31.10,3.90 29.96,6.78" fill="#f28a1c"/><circle cx="27" cy="8" r="2.600" fill="#fff2a8"/></svg>
<svg class="a" style="left:816px;top:51px;" width="34" height="32" viewBox="0 0 34 32"><linearGradient id="gPl" x1="0" y1="0" x2="1" y2="1"><stop offset="0" stop-color="#ffffff"/><stop offset="1" stop-color="#c4c8d0"/></linearGradient><linearGradient id="gPo" x1="0" y1="0" x2="0" y2="1"><stop offset="0" stop-color="#fbb47c"/><stop offset="1" stop-color="#f49c58"/></linearGradient><rect x="11.500" y="2" width="20" height="20" fill="url(#gPl)" stroke="#1f3468" stroke-width="1"/><rect x="2" y="10.500" width="20.500" height="20" fill="url(#gPo)" stroke="#cf6a1c" stroke-width="1.100"/><path d="M11.500,10.500 V22 H22.500" fill="none" stroke="#cf6a1c" stroke-width="0.900"/></svg>
<svg class="a" style="left:829px;top:104px;" width="8" height="5" viewBox="0 0 8 5"><polygon points="1.8,1.5 6.4,1.5 4.1,4.3" fill="#444"/></svg>
<svg class="a" style="left:862px;top:52px;" width="18" height="17" viewBox="0 0 18 17"><linearGradient id="gAx" x1="0" y1="0" x2="1" y2="1"><stop offset="0" stop-color="#ffffff"/><stop offset="1" stop-color="#c0c4cc"/></linearGradient><rect x="4.500" y="1" width="12" height="12" fill="url(#gAx)" stroke="#1f3468" stroke-width="1"/><path d="M1.500,16 L12.500,6" stroke="#b85a2c" stroke-width="1.500"/></svg>
<svg class="a" style="left:913px;top:59px;" width="6" height="4" viewBox="0 0 6 4"><polygon points="0.5,0.8 5,0.8 2.75,3.6" fill="#444"/></svg>
<svg class="a" style="left:862px;top:76px;" width="17" height="17" viewBox="0 0 17 17"><path d="M8.500,2.500 L14.500,8.500 L8.500,14.500 L2.500,8.500 Z" fill="#fbd0a8" stroke="#cf6a1c" stroke-width="1.100"/><path d="M8.500,0 V3 M8.500,14 V17 M0,8.500 H3 M14,8.500 H17" stroke="#cf6a1c" stroke-width="1"/><circle cx="8.500" cy="8.500" r="2.200" fill="#fff" stroke="#cf6a1c" stroke-width="1.100"/><circle cx="8.500" cy="8.500" r="0.800" fill="#cf6a1c"/></svg>
<svg class="a" style="left:920px;top:83px;" width="6" height="4" viewBox="0 0 6 4"><polygon points="0.5,0.8 5,0.8 2.75,3.6" fill="#444"/></svg>
<svg class="a" style="left:862px;top:100px;" width="18" height="18" viewBox="0 0 18 18"><path d="M2.500,2 V15.500 H15 M2.500,15.500 L11,7" fill="none" stroke="#222" stroke-width="1"/><polygon points="2.500,0 4.300,3.500 0.700,3.500" fill="#222"/><polygon points="17,15.500 13.500,13.700 13.500,17.300" fill="#222"/><rect x="1.200" y="14.200" width="2.600" height="2.600" fill="#cfe0ff" stroke="#2c5cc0" stroke-width="0.700"/></svg>
<svg class="a" style="left:937px;top:50px;" width="20" height="22" viewBox="0 0 20 22"><path d="M6,5.500 H13 M4,7.500 V15 M6,17 H13" stroke="#1f3468" stroke-width="1" fill="none"/><rect x="2.1" y="3.6" width="3.800" height="3.800" fill="#fff" stroke="#1f3468" stroke-width="1"/><rect x="13.1" y="3.6" width="3.800" height="3.800" fill="#8fb4ec" stroke="#1f3468" stroke-width="1"/><rect x="2.1" y="15.1" width="3.800" height="3.800" fill="#8fb4ec" stroke="#1f3468" stroke-width="1"/><rect x="13.1" y="15.1" width="3.800" height="3.800" fill="#8fb4ec" stroke="#1f3468" stroke-width="1"/></svg>
<svg class="a" style="left:962px;top:50px;" width="20" height="22" viewBox="0 0 20 22"><path d="M9.500,2.500 V19.500" stroke="#111" stroke-width="1.200"/><path d="M2.500,5.500 H5 Q7.500,8 6.500,12 V17.500 H2.500 Z" fill="#fff" stroke="#222" stroke-width="1"/><path d="M16.500,5.500 H14 Q11.500,8 12.500,12 V17.500 H16.500 Z" fill="#9ccdf2" stroke="#1f3468" stroke-width="1"/></svg>
<svg class="a" style="left:937px;top:74px;" width="20" height="22" viewBox="0 0 20 22"><circle cx="9.500" cy="11" r="6" fill="none" stroke="#1f3468" stroke-width="1.100"/><rect x="7.6" y="3.1" width="3.800" height="3.800" fill="#fff" stroke="#1f3468" stroke-width="1"/><rect x="1.6" y="9.1" width="3.800" height="3.800" fill="#8fb4ec" stroke="#1f3468" stroke-width="1"/><rect x="13.6" y="9.1" width="3.800" height="3.800" fill="#8fb4ec" stroke="#1f3468" stroke-width="1"/><rect x="7.6" y="15.1" width="3.800" height="3.800" fill="#8fb4ec" stroke="#1f3468" stroke-width="1"/></svg>
<svg class="a" style="left:937px;top:98px;" width="20" height="22" viewBox="0 0 20 22"><path d="M4,2.500 V7.500 M1.500,5 H6.500 M15,2.500 V7.500 M12.500,5 H17.500 M9,7.500 V13 M6.500,10.200 H11.500" stroke="#111" stroke-width="1.100" fill="none"/><rect x="2.1" y="9.6" width="3.800" height="3.800" fill="#8fb4ec" stroke="#1f3468" stroke-width="1"/><rect x="13.1" y="9.6" width="3.800" height="3.800" fill="#fff" stroke="#1f3468" stroke-width="1"/><rect x="7.1" y="14.1" width="3.800" height="3.800" fill="#8fb4ec" stroke="#1f3468" stroke-width="1"/></svg>
<svg class="a" style="left:993px;top:51px;" width="32" height="32" viewBox="0 0 32 32"><rect x="1.500" y="1.500" width="29" height="29" rx="7" fill="#e9e9e9" stroke="#d2d2d2" stroke-width="1"/><path d="M1.500,10 Q11,6 20,9 Q26,5 30.500,4 M12,30.500 Q10,18 11,8 M20,9 Q22,20 21,30.500 M1.500,20 Q11,17 21,20 Q26,17 30.500,15" fill="none" stroke="#f8f8f8" stroke-width="1"/><path d="M20,9 Q22,20 21,30.500" fill="none" stroke="#d8d8d8" stroke-width="0.800"/></svg>
<svg class="a" style="left:1006px;top:104px;" width="8" height="5" viewBox="0 0 8 5"><polygon points="1.5,1.2 6.1,1.2 3.8,4" fill="#8e8e8e"/></svg>
<svg class="a" style="left:1035px;top:53px;" width="16" height="16" viewBox="0 0 16 16"><path d="M1,5.500 L6.500,1 L15,8 L9.500,14 Z" fill="#ececec" stroke="#b8b8b8" stroke-width="1" stroke-dasharray="2.500 1.500"/><circle cx="9.500" cy="14" r="0.900" fill="#aaa"/></svg>
<svg class="a" style="left:1033px;top:75px;" width="20" height="20" viewBox="0 0 20 20"><path d="M3.500,5 L9,2 L14.500,5 L9,8 Z M7,13 L12.500,10 L18,13 L12.500,16 Z" fill="#dcdcdc" stroke="#c2c2c2" stroke-width="0.900"/><path d="M15,6 Q18,6.500 17.500,9 M16,9 H19 M17.500,7.500 V10.500" stroke="#bdbdbd" stroke-width="0.900" fill="none"/></svg>
<svg class="a" style="left:1095px;top:53px;" width="16" height="16" viewBox="0 0 16 16"><rect x="0.600" y="0.600" width="14.800" height="14.800" rx="1" fill="#f8ab6c" stroke="#cf6a1c" stroke-width="1"/><path d="M8,0.600 V15.400 M5.500,3.500 H10.500 M5.500,6.500 H10.500 M5.500,9.500 H10.500 M5.500,12.500 H10.500" stroke="#5a2c0c" stroke-width="1" fill="none"/></svg>
<svg class="a" style="left:1120px;top:53px;" width="16" height="16" viewBox="0 0 16 16"><path d="M1,0.800 Q14,1.500 15.400,15 H8 Q8,9 2,8 Z" fill="#f8ab6c" stroke="#cf6a1c" stroke-width="1"/><path d="M4,8.500 L7,2 M6.500,10.500 L12,4.500 M8,13 L14.500,9.500" stroke="#e8853c" stroke-width="0.800"/></svg>
<svg class="a" style="left:1145px;top:53px;" width="16" height="16" viewBox="0 0 16 16"><rect x="3.500" y="2.500" width="9" height="7.500" fill="#9dbdf0"/><path d="M0.300,2 H15.700 M2,2 Q2.300,4.200 4,4.600 M14,2 Q13.700,4.200 12,4.600" fill="none" stroke="#1f3468" stroke-width="1.100"/><path d="M2.500,10.500 H5.500 V8.500 H10.500 V10.500 H13.500 V15.400 H2.500 Z" fill="#f4f7fc" stroke="#1f3468" stroke-width="1.100"/><path d="M8,12.500 V5.500" stroke="#111" stroke-width="1.400"/><polygon points="8,3.500 10.800,7 5.200,7" fill="#111"/></svg>
<svg class="a" style="left:1095px;top:77px;" width="16" height="16" viewBox="0 0 16 16"><path d="M0.600,0.600 H15.400 V15.400 H8 V10 Q7.500,8 5,8 H0.600 Z" fill="#f8ab6c" stroke="#cf6a1c" stroke-width="1"/></svg>
<svg class="a" style="left:1120px;top:77px;" width="16" height="16" viewBox="0 0 16 16"><path d="M2,12 L9,4.500 L11,6.500 L4.500,13.500 Z" fill="#f8ab6c" stroke="#cf6a1c" stroke-width="1"/><rect x="10" y="1" width="5.500" height="3.500" fill="#f8ab6c" stroke="#cf6a1c" stroke-width="1"/><path d="M10,0.500 V8" stroke="#5a2c0c" stroke-width="1"/><path d="M3,3 L12,12 M12.500,5 L7.500,12" stroke="#222" stroke-width="1.100"/><circle cx="7" cy="13.500" r="1.800" fill="none" stroke="#222" stroke-width="1"/><circle cx="13" cy="12.500" r="1.800" fill="none" stroke="#222" stroke-width="1"/></svg>
<svg class="a" style="left:1145px;top:77px;" width="16" height="16" viewBox="0 0 16 16"><path d="M0.600,12.500 V0.600 H11.500 L15.400,4.500 V12.500 H12" fill="#f6f6f8" stroke="#1f3468" stroke-width="1"/><path d="M11.500,0.600 V4.500 H15.400" fill="none" stroke="#1f3468" stroke-width="0.900"/><circle cx="6.500" cy="10" r="4.500" fill="#f8ab6c" stroke="#cf6a1c" stroke-width="1"/><path d="M9,2.500 L13.500,9 H4.500 Z" fill="#f8ab6c" stroke="#cf6a1c" stroke-width="1"/><rect x="5.500" y="11.500" width="6" height="4" fill="#f8ab6c" stroke="#cf6a1c" stroke-width="1"/></svg>
<svg class="a" style="left:1095px;top:101px;" width="16" height="16" viewBox="0 0 16 16"><rect x="5" y="0.600" width="10.400" height="10.400" rx="1" fill="#f8ab6c" stroke="#cf6a1c" stroke-width="1"/><circle cx="6" cy="10.500" r="5" fill="#f8ab6c" stroke="#cf6a1c" stroke-width="1"/><path d="M6,10.500 V5.500 Q11,5.500 11,10.500 Z" fill="#a8c8f4" stroke="#2c5cb8" stroke-width="0.900"/></svg>
<svg class="a" style="left:1120px;top:101px;" width="16" height="16" viewBox="0 0 16 16"><rect x="1.500" y="0.600" width="13" height="9.500" fill="#f8ab6c" stroke="#cf6a1c" stroke-width="1"/><rect x="1" y="10.500" width="14" height="5" fill="#e4ecf8" stroke="#1f3468" stroke-width="1.100"/><path d="M8,12 V4 M5.500,6.500 L8,3.500 L10.500,6.500 Z" fill="#111" stroke="#111" stroke-width="1.200"/></svg>
<svg class="a" style="left:1145px;top:101px;" width="16" height="16" viewBox="0 0 16 16"><rect x="0.600" y="2" width="9" height="7.500" fill="#d8c060" stroke="#8a7c2c" stroke-width="0.900"/><path d="M1,4.500 H9.500 M1,7 H9.500" stroke="#8a7c2c" stroke-width="0.800"/><rect x="6.500" y="8" width="9" height="7.500" fill="#f8ab6c" stroke="#cf6a1c" stroke-width="1"/><path d="M10.500,1.200 H13.300 V4.500" fill="none" stroke="#e02020" stroke-width="1.300"/><polygon points="11,4 15.600,4 13.300,7" fill="#e02020"/></svg>
<svg class="a" style="left:1186px;top:51px;" width="32" height="32" viewBox="0 0 32 32"><defs><radialGradient id="gSt" gradientUnits="userSpaceOnUse" cx="7" cy="11" r="24"><stop offset="0" stop-color="#e8202c"/><stop offset="0.170" stop-color="#f0482c"/><stop offset="0.300" stop-color="#f8a02c"/><stop offset="0.420" stop-color="#f4e440"/><stop offset="0.560" stop-color="#60d060"/><stop offset="0.700" stop-color="#38c8d8"/><stop offset="0.850" stop-color="#3878e0"/><stop offset="1" stop-color="#2848b8"/></radialGradient><clipPath id="cSt"><path d="M1,8 L8,1 H29 V28 H1 Z"/></clipPath></defs>
<g clip-path="url(#cSt)"><rect x="0" y="0" width="32" height="32" fill="url(#gSt)"/></g><path d="M1,8 L8,1 H29 V28 H1 Z" fill="none" stroke="#1f3468" stroke-width="1"/>
<path d="M21,27 H28" stroke="#1c2c54" stroke-width="2.200"/><polygon points="27,23.300 31.800,27 27,30.700" fill="#1c2c54"/><circle cx="19" cy="27" r="4" fill="#bcd4f4" stroke="#7a8494" stroke-width="1"/></svg>
<svg class="a" style="left:1260px;top:51px;" width="34" height="32" viewBox="0 0 34 32"><linearGradient id="gCv" x1="0" y1="0" x2="1" y2="1"><stop offset="0" stop-color="#fdfdfe"/><stop offset="1" stop-color="#d4d7de"/></linearGradient><polygon points="1.500,9 8,2 29.500,2 23,9" fill="#ffffff" stroke="#1f3468" stroke-width="1"/><polygon points="23,9 29.500,2 29.500,22 23,29.500" fill="#c2c6d0" stroke="#1f3468" stroke-width="1"/><rect x="1.500" y="9" width="21.500" height="20.500" fill="url(#gCv)" stroke="#1f3468" stroke-width="1"/><path d="M24,27.500 H30" stroke="#1c2c54" stroke-width="2.200"/><polygon points="29,23.800 33.800,27.500 29,31.200" fill="#1c2c54"/><circle cx="21" cy="27.500" r="4" fill="#bcd4f4" stroke="#5a78b0" stroke-width="1"/></svg>
<svg class="a" style="left:1324.5px;top:53px;" width="16" height="16" viewBox="0 0 16 16"><circle cx="8" cy="8" r="7" fill="#fafafa" stroke="#3a3a3a" stroke-width="1.100"/><polygon points="4,5.500 12,5.500 8,11.500" fill="#222"/></svg>
<svg class="a" style="left:1345px;top:59px;" width="7" height="4" viewBox="0 0 7 4"><polygon points="0.8,0.5 5.8,0.5 3.3,3.5" fill="#444"/></svg>
<div class="a" style="left:0px;top:140px;width:215px;height:564px;background:#f0f0f0;"></div>
<div class="a" style="left:3px;top:140px;width:209px;height:562px;background:#fff;"></div>
<div class="a" style="left:3px;top:140px;width:209px;height:63px;background:#f3f3f3;"></div>
<svg class="a" style="left:0px;top:186px;" width="60" height="12" viewBox="0 186 60 12"><path d="M12.500,188 V193.500 H15.500 V188 M11,188 H17" fill="none" stroke="#333" stroke-width="1.200"/>
<path d="M30.500,188 H35 V194 H30.500 Z M40,188 H44.500 V194 H40 Z M35,190.500 H40" fill="#222" stroke="#222" stroke-width="1"/><rect x="32" y="190" width="1.500" height="2" fill="#fff"/><rect x="41.500" y="190" width="1.500" height="2" fill="#fff"/></svg>
<div class="a" style="left:3px;top:203px;width:209px;height:1px;background:#e3e3e3;"></div>
<div class="a" style="left:3px;top:204px;width:209px;height:18px;background:#f0f0f0;"></div>
<span class="t" style="left:26.0px;top:205.8px;font-size:11.5px;line-height:15px;color:#1a1a1a;letter-spacing:-0.37px;">Part1</span>
<span class="t" style="left:45.0px;top:223.8px;font-size:11.5px;line-height:15px;color:#1a1a1a;letter-spacing:-0.61px;">Folded Model</span>
<span class="t" style="left:64.0px;top:241.8px;font-size:11.5px;line-height:15px;color:#1a1a1a;letter-spacing:-0.57px;">Solid Bodies(1)</span>
<span class="t" style="left:64.0px;top:259.8px;font-size:11.5px;line-height:15px;color:#1a1a1a;letter-spacing:-0.39px;">View: Master</span>
<span class="t" style="left:64.0px;top:277.8px;font-size:11.5px;line-height:15px;color:#1a1a1a;letter-spacing:-0.54px;">Origin</span>
<span class="t" style="left:64.0px;top:295.8px;font-size:11.5px;line-height:15px;color:#1a1a1a;letter-spacing:-0.62px;">Face1</span>
<span class="t" style="left:64.0px;top:313.8px;font-size:11.5px;line-height:15px;color:#1a1a1a;letter-spacing:-0.59px;">Flange1</span>
<span class="t" style="left:64.0px;top:331.8px;font-size:11.5px;line-height:15px;color:#1a1a1a;letter-spacing:-0.59px;">Flange2</span>
<span class="t" style="left:64.0px;top:349.8px;font-size:11.5px;line-height:15px;color:#1a1a1a;letter-spacing:-0.51px;">Sketch4</span>
<span class="t" style="left:64.0px;top:367.8px;font-size:11.5px;line-height:15px;color:#1a1a1a;letter-spacing:-0.47px;">End of Folded</span>
<svg class="a" style="left:0px;top:200px;" width="215" height="190" viewBox="0 200 215 190"><path d="M32.500,240 V375.500" stroke="#9a9a9a" stroke-width="1" stroke-dasharray="1 1"/>
<path d="M33,357.5 H44" stroke="#9a9a9a" stroke-width="1" stroke-dasharray="1 1"/>
<path d="M33,375.5 H44" stroke="#9a9a9a" stroke-width="1" stroke-dasharray="1 1"/>
<path d="M16,231.500 H25" stroke="#9a9a9a" stroke-width="1" stroke-dasharray="1 1"/><path d="M10.500,222 V226" stroke="#9a9a9a" stroke-width="1" stroke-dasharray="1 1"/>
<path d="M7,228.500 L10.500,232.500 L14,228.500" fill="none" stroke="#333" stroke-width="2"/>
<path d="M28.500,245.5 L32.500,249 L28.500,252.5" fill="none" stroke="#8e8e8e" stroke-width="1.800"/><path d="M35,249.5 H38" stroke="#9a9a9a" stroke-width="1" stroke-dasharray="1 1"/>
<path d="M28.500,263.5 L32.500,267 L28.500,270.5" fill="none" stroke="#8e8e8e" stroke-width="1.800"/><path d="M35,267.5 H38" stroke="#9a9a9a" stroke-width="1" stroke-dasharray="1 1"/>
<path d="M28.500,281.5 L32.500,285 L28.500,288.5" fill="none" stroke="#8e8e8e" stroke-width="1.800"/><path d="M35,285.5 H38" stroke="#9a9a9a" stroke-width="1" stroke-dasharray="1 1"/>
<path d="M28.500,299.5 L32.500,303 L28.500,306.5" fill="none" stroke="#8e8e8e" stroke-width="1.800"/><path d="M35,303.5 H38" stroke="#9a9a9a" stroke-width="1" stroke-dasharray="1 1"/>
<path d="M28.500,317.5 L32.500,321 L28.500,324.5" fill="none" stroke="#8e8e8e" stroke-width="1.800"/><path d="M35,321.5 H38" stroke="#9a9a9a" stroke-width="1" stroke-dasharray="1 1"/>
<path d="M28.500,335.5 L32.500,339 L28.500,342.5" fill="none" stroke="#8e8e8e" stroke-width="1.800"/><path d="M35,339.5 H38" stroke="#9a9a9a" stroke-width="1" stroke-dasharray="1 1"/>
<linearGradient id="gFl" x1="0" y1="0" x2="1" y2="1"><stop offset="0" stop-color="#b4d0f2"/><stop offset="1" stop-color="#4a7cc8"/></linearGradient>
<path d="M8.5,212.3 L13.7,206.8 H23.6 L17.8,212.3 Z" fill="#fff" stroke="#111" stroke-width="1.300" stroke-linejoin="round"/><path d="M17.8,212.3 L23.6,206.8 V211.2 L17.8,219 Z" fill="url(#gFl)" stroke="#111" stroke-width="1.200" stroke-linejoin="round"/>
<path d="M28.500,229 L32,225 H42.500 V233 L39,237 H28.500 Z" fill="#fff" stroke="#222" stroke-width="1.100"/><path d="M28.500,229 H39 V237 M39,229 L42.500,225 M33.500,229 V237 M34,225 L31,229" fill="none" stroke="#222" stroke-width="1"/><circle cx="31" cy="233" r="1.300" fill="none" stroke="#222" stroke-width="0.900"/><circle cx="36.500" cy="227" r="1" fill="none" stroke="#222" stroke-width="0.800"/>
<path d="M46.5,242.5 H51.5 L53,244.5 H61 V255 H46.5 Z" fill="#f6dca0" stroke="#b89858" stroke-width="1"/>
<rect x="52.500" y="250" width="6" height="6" rx="1" fill="#fff" stroke="#333" stroke-width="0.900"/><rect x="55.500" y="247.500" width="6" height="6" rx="1" fill="#eee" stroke="#333" stroke-width="0.900"/>
<path d="M47.500,261 V273 H50 M47.500,261 H50 M50,267 H53" fill="none" stroke="#222" stroke-width="1.100" stroke-dasharray="2 1"/><rect x="46.500" y="259" width="4" height="3" fill="#333"/><rect x="52" y="262" width="4.500" height="3" fill="#5f86cc"/><rect x="55.500" y="266" width="5.500" height="3" fill="#5f86cc"/><rect x="52" y="270.500" width="4" height="3" fill="#333"/>
<path d="M46.5,278.5 H51.5 L53,280.5 H61 V291 H46.5 Z" fill="#f6dca0" stroke="#b89858" stroke-width="1"/>
<linearGradient id="gFc" x1="0" y1="0" x2="1" y2="1"><stop offset="0" stop-color="#9cc0ee"/><stop offset="1" stop-color="#4a80d0"/></linearGradient><rect x="46.500" y="295.500" width="15" height="15" fill="url(#gFc)" stroke="#1c2c54" stroke-width="1"/>
<path d="M46.5,320.3 L51.7,314.8 H61.6 L55.8,320.3 Z" fill="#fff" stroke="#111" stroke-width="1.300" stroke-linejoin="round"/><path d="M55.8,320.3 L61.6,314.8 V319.2 L55.8,327 Z" fill="url(#gFl)" stroke="#111" stroke-width="1.200" stroke-linejoin="round"/>
<path d="M46.5,338.3 L51.7,332.8 H61.6 L55.8,338.3 Z" fill="#fff" stroke="#111" stroke-width="1.300" stroke-linejoin="round"/><path d="M55.8,338.3 L61.6,332.8 V337.2 L55.8,345 Z" fill="url(#gFl)" stroke="#111" stroke-width="1.200" stroke-linejoin="round"/>
<rect x="47.500" y="350.500" width="14" height="13.500" fill="#dfeaf8" stroke="#111" stroke-width="1.300"/><path d="M51,360.500 H59.500 M50.500,361 L57,354.500" fill="none" stroke="#111" stroke-width="1.300"/><path d="M55.500,355.500 L59.500,350.500 L61.500,352.500 L57.500,357 Z" fill="#f4c820"/><circle cx="49.800" cy="350.800" r="1.600" fill="#f0a050" stroke="#c8641c" stroke-width="0.700"/><path d="M46.500,354.500 Q49.800,351.500 53,354.500 Z" fill="#f0a050" stroke="#c8641c" stroke-width="0.700"/><path d="M49.800,355 V358" stroke="#c8641c" stroke-width="0.900"/>
<polygon points="50.300,367.300 57,367.300 61.200,371.500 61.200,377.700 57,381.900 50.300,381.900 46.100,377.700 46.100,371.500" fill="#e63a3a" stroke="#8e1616" stroke-width="1"/><path d="M50,371 L57.300,378.300 M57.300,371 L50,378.300" stroke="#fbeaea" stroke-width="2.300"/></svg>
<div class="a" style="left:0px;top:702px;width:215px;height:1px;background:#a8a8a8;"></div>
<div class="a" style="left:0px;top:703px;width:215px;height:1px;background:#e8e8e8;"></div>
<div class="a" style="left:0px;top:139px;width:322px;height:50px;background:#fff;border:1px solid #9c9c9c;box-sizing:border-box;box-shadow:0 1px 7px rgba(0,0,0,.38);z-index:5;"></div>
<div class="a" style="left:1px;top:172px;width:320px;height:16px;background:#e2e2e2;border-top:1px solid #b4b4b4;box-sizing:border-box;z-index:6;"></div>
<span class="t" style="left:9.0px;top:146.9px;font-size:12.5px;line-height:16px;color:#ababab;letter-spacing:-0.68px;z-index:7;">Extrude</span>
<svg class="a" style="left:296px;top:145px;z-index:7;" width="20" height="20" viewBox="0 0 20 20"><path d="M4.500,4.500 L15,14.500 M15,4.500 L4.500,14.500" stroke="#8a8a8a" stroke-width="1"/></svg>
<svg class="a" style="left:150px;top:172px;z-index:7;" width="22" height="15" viewBox="0 0 22 15"><polygon points="3,1.500 19,1.500 11,14" fill="#0a0a0a"/></svg>
<div class="a" style="left:215px;top:140px;width:1151px;height:540px;background:#fff;"></div>
<svg class="a" style="left:215px;top:140px;" width="1151" height="540" viewBox="215 140 1151 540"><defs>
<linearGradient id="gTop" gradientUnits="userSpaceOnUse" x1="500" y1="200" x2="960" y2="480"><stop offset="0" stop-color="#d0d0d0"/><stop offset="1" stop-color="#c9c9c9"/></linearGradient>
<linearGradient id="gWeb" gradientUnits="userSpaceOnUse" x1="760" y1="403.9" x2="723" y2="468"><stop offset="0" stop-color="#a3a3a3"/><stop offset="0.1" stop-color="#acacac"/><stop offset="0.25" stop-color="#bcbcbc"/><stop offset="0.45" stop-color="#cacaca"/><stop offset="0.7" stop-color="#d0d0d0"/><stop offset="1" stop-color="#c7c7c7"/></linearGradient>
<linearGradient id="gWebL" gradientUnits="userSpaceOnUse" x1="547" y1="0" x2="760" y2="0"><stop offset="0" stop-color="#d4d4d4" stop-opacity="0.85"/><stop offset="1" stop-color="#d4d4d4" stop-opacity="0"/></linearGradient>
<linearGradient id="gBot" gradientUnits="userSpaceOnUse" x1="772" y1="512" x2="736" y2="574"><stop offset="0" stop-color="#adadad"/><stop offset="0.2" stop-color="#bdbdbd"/><stop offset="0.5" stop-color="#cacaca"/><stop offset="1" stop-color="#d2d2d2"/></linearGradient>
<linearGradient id="gBend" gradientUnits="userSpaceOnUse" x1="776" y1="499" x2="770" y2="512"><stop offset="0" stop-color="#cdcdcd"/><stop offset="1" stop-color="#bdbdbd"/></linearGradient>
<linearGradient id="gHole" x1="0" y1="0" x2="0" y2="1"><stop offset="0" stop-color="#7594c6"/><stop offset="1" stop-color="#96b0dc"/></linearGradient>
<linearGradient id="gWebR" gradientUnits="userSpaceOnUse" x1="935" y1="0" x2="1011" y2="0"><stop offset="0" stop-color="#cecece" stop-opacity="0"/><stop offset="0.7" stop-color="#cecece" stop-opacity="0.6"/><stop offset="1" stop-color="#c4c4c4" stop-opacity="0.75"/></linearGradient>
<radialGradient id="gShadeR" gradientUnits="userSpaceOnUse" cx="985" cy="496" r="70"><stop offset="0" stop-color="#8c8c8c" stop-opacity="0.22"/><stop offset="1" stop-color="#8c8c8c" stop-opacity="0"/></radialGradient>
</defs>
<polygon points="542.0,186.5 544.5,184.6 551.0,184.4 553.5,186.0 1010.2,451.7 1004.0,453.2" fill="#cccccc"/>
<path d="M542,186.5 Q543.5,184.6 546,184.4 L550,184.4 Q552.5,184.8 553.5,186.6" fill="none" stroke="#2a2a2a" stroke-width="0.9" stroke-linejoin="round"/>
<polygon points="547.3,280.9 547.3,366.7 1011.4,633.5 1011.4,465.7 1004.4,461.5 931.4,503.0" fill="url(#gWeb)" stroke="#2a2a2a" stroke-width="0.9" stroke-linejoin="round"/>
<polygon points="547.3,280.9 547.3,366.7 1011.4,633.5 1011.4,465.7 1004.4,461.5 931.4,503.0" fill="url(#gWebL)"/>
<polygon points="547.3,280.9 547.3,366.7 1011.4,633.5 1011.4,465.7 1004.4,461.5 931.4,503.0" fill="url(#gWebR)"/>
<polygon points="547.3,280.9 547.3,366.7 1011.4,633.5 1011.4,465.7 1004.4,461.5 931.4,503.0" fill="url(#gShadeR)"/>
<path d="M547.3,366.7 L1011.4,633.5 Q1011,642 1004.4,645.8 L540.5,379 Q546.8,375 547.3,366.7 Z" fill="url(#gBend)" stroke="#2a2a2a" stroke-width="0.9" stroke-linejoin="round"/>
<polygon points="540.5,379.0 1004.4,645.8 940.0,683.0 922.0,683.0 469.0,420.2" fill="url(#gBot)" stroke="#2a2a2a" stroke-width="0.9" stroke-linejoin="round"/>
<polygon points="469.0,420.2 922.0,683.0 906.0,683.0 469.0,429.0" fill="#bcbcbc" stroke="#2a2a2a" stroke-width="0.9" stroke-linejoin="round"/>
<polygon points="1004.4,645.8 1005.0,653.0 955.0,683.0 941.5,683.0" fill="#b2b2b2" stroke="#2a2a2a" stroke-width="0.9" stroke-linejoin="round"/>
<path d="M1011.4,633 L1018.6,629 Q1018.5,646 1005,653 L1004.4,645.8 Q1011,642 1011.4,633 Z" fill="#ababab" stroke="#2a2a2a" stroke-width="0.9" stroke-linejoin="round"/>
<polygon points="1011.4,465.7 1018.5,461.8 1018.6,629.0 1011.4,633.0" fill="#b3b3b3" stroke="#2a2a2a" stroke-width="0.9" stroke-linejoin="round"/>
<path d="M1004,453.2 L1010.2,451.7 Q1018.2,452 1018.5,461.8 L1011.4,465.7 L1004.4,461.5 Z" fill="#a9a9a9" stroke="#2a2a2a" stroke-width="0.9" stroke-linejoin="round"/>
<path d="M1004.4,461.5 Q1006,457.5 1011.4,465.7" fill="#d8d8d8" stroke="#2a2a2a" stroke-width="0.6"/>
<polygon points="931.4,495.4 1004.0,453.2 1004.4,461.5 931.4,503.0" fill="#b6b6b6" stroke="#2a2a2a" stroke-width="0.9" stroke-linejoin="round"/>
<polygon points="468.4,228.0 931.4,495.4 931.4,503.0 468.4,235.3" fill="#c3c3c3" stroke="#2a2a2a" stroke-width="0.9" stroke-linejoin="round"/>
<polygon points="468.4,228.0 542.0,186.5 1004.0,453.2 931.4,495.4" fill="url(#gTop)"/>
<polyline points="542.0,186.5 1004.0,453.2 931.4,495.4" fill="none" stroke="#2a2a2a" stroke-width="0.9" stroke-linejoin="round"/>
<polyline points="542.0,186.5 468.4,228.0 931.4,495.4" fill="none" stroke="#f4f41e" stroke-width="2.2" stroke-linejoin="round" stroke-linecap="round"/>
<rect x="552.8" y="175.6" width="4.6" height="4.6" fill="#f2f212"/>
<clipPath id="hc0"><ellipse cx="548.5" cy="232.0" rx="31.0" ry="17.9"/></clipPath>
<ellipse cx="548.5" cy="240.2" rx="31.0" ry="17.9" fill="none" stroke="#b08c84" stroke-width="0.8"/>
<ellipse cx="548.5" cy="232.0" rx="31.0" ry="17.9" fill="#869fc2"/>
<g clip-path="url(#hc0)">
<ellipse cx="548.5" cy="240.2" rx="30.0" ry="17.9" fill="#8aa6cc" stroke="#3d5a96" stroke-width="1"/>
<clipPath id="hfl"><ellipse cx="548.5" cy="240.2" rx="29.5" ry="17.4"/></clipPath>
<g clip-path="url(#hfl)"><path d="M547.5,229.5 L547.5,262.0 L508.5,262.0 L508.5,229.5 Z" fill="#bbdffb"/>
<path d="M547.5,229.5 L547.5,218.0 L527.5,218.0 Z" fill="#d4e9fb"/></g>
</g>
<ellipse cx="548.5" cy="232.0" rx="31.0" ry="17.9" fill="none" stroke="#86b892" stroke-width="1.6"/>
<ellipse cx="548.5" cy="232.0" rx="30.4" ry="17.3" fill="none" stroke="#0e1460" stroke-width="1.5" stroke-dasharray="2.6 5.2"/>
<clipPath id="hc1"><ellipse cx="642.5" cy="286.3" rx="31.0" ry="17.9"/></clipPath>
<ellipse cx="642.5" cy="294.5" rx="31.0" ry="17.9" fill="none" stroke="#b08c84" stroke-width="0.8"/>
<ellipse cx="642.5" cy="286.3" rx="31.0" ry="17.9" fill="#6686ba"/>
<g clip-path="url(#hc1)">
<ellipse cx="642.5" cy="294.5" rx="30.0" ry="17.9" fill="url(#gHole)" stroke="#3d5a96" stroke-width="1.1"/>
</g>
<ellipse cx="642.5" cy="286.3" rx="31.0" ry="17.9" fill="none" stroke="#86b892" stroke-width="1.6"/>
<ellipse cx="642.5" cy="286.3" rx="30.4" ry="17.3" fill="none" stroke="#0e1460" stroke-width="1.5" stroke-dasharray="2.6 5.2"/>
<rect x="641.0" y="284.5" width="3" height="3" fill="#0e1a8c"/>
<clipPath id="hc2"><ellipse cx="736.5" cy="340.6" rx="31.0" ry="17.9"/></clipPath>
<ellipse cx="736.5" cy="348.8" rx="31.0" ry="17.9" fill="none" stroke="#b08c84" stroke-width="0.8"/>
<ellipse cx="736.5" cy="340.6" rx="31.0" ry="17.9" fill="#6686ba"/>
<g clip-path="url(#hc2)">
<ellipse cx="736.5" cy="348.8" rx="30.0" ry="17.9" fill="url(#gHole)" stroke="#3d5a96" stroke-width="1.1"/>
</g>
<ellipse cx="736.5" cy="340.6" rx="31.0" ry="17.9" fill="none" stroke="#86b892" stroke-width="1.6"/>
<ellipse cx="736.5" cy="340.6" rx="30.4" ry="17.3" fill="none" stroke="#0e1460" stroke-width="1.5" stroke-dasharray="2.6 5.2"/>
<rect x="735.0" y="338.8" width="3" height="3" fill="#0e1a8c"/>
<clipPath id="hc3"><ellipse cx="830.5" cy="394.9" rx="31.0" ry="17.9"/></clipPath>
<ellipse cx="830.5" cy="403.1" rx="31.0" ry="17.9" fill="none" stroke="#b08c84" stroke-width="0.8"/>
<ellipse cx="830.5" cy="394.9" rx="31.0" ry="17.9" fill="#6686ba"/>
<g clip-path="url(#hc3)">
<ellipse cx="830.5" cy="403.1" rx="30.0" ry="17.9" fill="url(#gHole)" stroke="#3d5a96" stroke-width="1.1"/>
</g>
<ellipse cx="830.5" cy="394.9" rx="31.0" ry="17.9" fill="none" stroke="#86b892" stroke-width="1.6"/>
<ellipse cx="830.5" cy="394.9" rx="30.4" ry="17.3" fill="none" stroke="#0e1460" stroke-width="1.5" stroke-dasharray="2.6 5.2"/>
<rect x="829.0" y="393.1" width="3" height="3" fill="#0e1a8c"/>
<clipPath id="hc4"><ellipse cx="924.5" cy="449.2" rx="31.0" ry="17.9"/></clipPath>
<ellipse cx="924.5" cy="457.4" rx="31.0" ry="17.9" fill="none" stroke="#b08c84" stroke-width="0.8"/>
<ellipse cx="924.5" cy="449.2" rx="31.0" ry="17.9" fill="#6686ba"/>
<g clip-path="url(#hc4)">
<ellipse cx="924.5" cy="457.4" rx="30.0" ry="17.9" fill="url(#gHole)" stroke="#3d5a96" stroke-width="1.1"/>
</g>
<ellipse cx="924.5" cy="449.2" rx="31.0" ry="17.9" fill="none" stroke="#86b892" stroke-width="1.6"/>
<ellipse cx="924.5" cy="449.2" rx="30.4" ry="17.3" fill="none" stroke="#0e1460" stroke-width="1.5" stroke-dasharray="2.6 5.2"/>
<rect x="923.0" y="447.4" width="3" height="3" fill="#0e1a8c"/></svg>
<svg class="a" style="left:215px;top:140px;" width="1151" height="540" viewBox="215 140 1151 540"><line x1="407.0" y1="151.0" x2="548.5" y2="232.0" stroke="#1a1a6c" stroke-width="1.1"/>
<line x1="548.5" y1="232.0" x2="584.0" y2="252.5" stroke="#1a1a6c" stroke-width="1.1"/>
<line x1="606.0" y1="265.5" x2="642.5" y2="286.5" stroke="#1a1a6c" stroke-width="1.1"/>
<line x1="370.7" y1="172.5" x2="466.3" y2="226.3" stroke="#1a1a6c" stroke-width="1.1"/>
<line x1="466.3" y1="229.5" x2="399.3" y2="267.4" stroke="#1a1a6c" stroke-width="1.1"/>
<line x1="571.7" y1="219.2" x2="443.0" y2="292.0" stroke="#1a1a6c" stroke-width="1.1"/>
<line x1="380.6" y1="177.3" x2="389.0" y2="172.0" stroke="#1a1a6c" stroke-width="1.1"/>
<line x1="410.0" y1="159.0" x2="415.8" y2="155.4" stroke="#1a1a6c" stroke-width="1.1"/>
<line x1="376.0" y1="245.4" x2="452.0" y2="288.3" stroke="#1a1a6c" stroke-width="1.1"/>
<polygon points="379.8,177.6 387.4,170.9 389.2,173.7" fill="#1a1a6c"/>
<polygon points="416.0,155.2 408.4,161.9 406.6,159.1" fill="#1a1a6c"/>
<polygon points="414.7,267.2 407.5,265.6 409.7,261.8" fill="#1a1a6c"/>
<polygon points="447.6,285.6 454.8,287.2 452.6,291.0" fill="#1a1a6c"/>
<polygon points="560.0,225.5 564.2,220.8 566.2,224.2" fill="#1a1a6c"/>
<polygon points="569.0,221.0 564.8,225.7 562.8,222.3" fill="#1a1a6c"/>
<polygon points="553.5,235.0 559.7,236.3 557.7,239.7" fill="#1a1a6c"/>
<polygon points="560.0,238.7 553.8,237.4 555.8,234.0" fill="#1a1a6c"/>
<polygon points="630.0,279.5 636.2,280.8 634.2,284.2" fill="#1a1a6c"/>
<polygon points="637.0,283.5 630.8,282.2 632.8,278.8" fill="#1a1a6c"/>
<linearGradient id="gSh" x1="0" y1="0" x2="1" y2="0"><stop offset="0" stop-color="#b0641a"/><stop offset="0.5" stop-color="#eaa458"/><stop offset="1" stop-color="#b0641a"/></linearGradient>
<rect x="546.3" y="242" width="3.4" height="43" fill="url(#gSh)"/>
<path d="M541.3,283.5 H554.7 V286.5 L548,300.5 L541.3,286.5 Z" fill="#b96a14" stroke="#8f5008" stroke-width="0.6"/><path d="M546.5,284 V296 L548,299.5 L549.5,296 V284 Z" fill="#d98a34" opacity="0.7"/>
<radialGradient id="gBall" cx="0.35" cy="0.3" r="0.8"><stop offset="0" stop-color="#ffffff"/><stop offset="1" stop-color="#8c8c9c"/></radialGradient>
<ellipse cx="548.8" cy="239" rx="3.6" ry="5.2" fill="url(#gBall)"/></svg>
<span class="t" style="left:389.5px;top:158.2px;font-size:12.5px;line-height:16px;color:#30307e;letter-spacing:-1.11px;text-shadow:0 0 0.6px #30307e;">.630</span>
<span class="t" style="left:355.5px;top:231.2px;font-size:12.5px;line-height:16px;color:#30307e;letter-spacing:-0.44px;text-shadow:0 0 0.6px #30307e;">.750</span>
<span class="t" style="left:528.0px;top:231.2px;font-size:12.5px;line-height:16px;color:#30307e;letter-spacing:-1.61px;text-shadow:0 0 0.6px #30307e;">.750</span>
<span class="t" style="left:581.0px;top:252.2px;font-size:11.5px;line-height:15px;color:#2c2c7c;letter-spacing:0.06px;font-weight:bold;">1.625</span>
<div class="a" style="left:951px;top:213px;width:9px;height:22px;background:linear-gradient(90deg,#d8d8d8,#f0f0f0 50%,#c8c8c8);border:1px solid #a8a8a8;border-radius:4px;box-sizing:border-box;"></div>
<div class="a" style="left:963px;top:213px;width:155px;height:22px;background:linear-gradient(#f7f7f7,#e9e9e9 45%,#cfcfcf);border:1px solid #9a9a9a;border-radius:11px;box-sizing:border-box;box-shadow:0 1px 1px rgba(0,0,0,.15);"></div>
<div class="a" style="left:963px;top:243px;width:79px;height:22px;background:linear-gradient(#f7f7f7,#e9e9e9 45%,#cfcfcf);border:1px solid #9a9a9a;border-radius:11px;box-sizing:border-box;box-shadow:0 1px 1px rgba(0,0,0,.15);"></div>
<div class="a" style="left:963px;top:273px;width:120px;height:22px;background:linear-gradient(#f7f7f7,#e9e9e9 45%,#cfcfcf);border:1px solid #9a9a9a;border-radius:11px;box-sizing:border-box;box-shadow:0 1px 1px rgba(0,0,0,.15);"></div>
<div class="a" style="left:963px;top:303px;width:59px;height:22px;background:linear-gradient(#f7f7f7,#e9e9e9 45%,#cfcfcf);border:1px solid #9a9a9a;border-radius:11px;box-sizing:border-box;box-shadow:0 1px 1px rgba(0,0,0,.15);"></div>
<div class="a" style="left:1031px;top:303px;width:40px;height:22px;background:linear-gradient(#f7f7f7,#e9e9e9 45%,#cfcfcf);border:1px solid #9a9a9a;border-radius:11px;box-sizing:border-box;box-shadow:0 1px 1px rgba(0,0,0,.15);"></div>
<div class="a" style="left:1003px;top:214px;width:1px;height:20px;background:#a2a2a2;"></div>
<div class="a" style="left:1004px;top:214px;width:1px;height:20px;background:#f6f6f6;"></div>
<div class="a" style="left:1104px;top:214px;width:1px;height:20px;background:#a2a2a2;"></div>
<div class="a" style="left:1105px;top:214px;width:1px;height:20px;background:#f6f6f6;"></div>
<div class="a" style="left:1024px;top:244px;width:1px;height:20px;background:#a2a2a2;"></div>
<div class="a" style="left:1025px;top:244px;width:1px;height:20px;background:#f6f6f6;"></div>
<div class="a" style="left:1003px;top:274px;width:1px;height:20px;background:#a2a2a2;"></div>
<div class="a" style="left:1004px;top:274px;width:1px;height:20px;background:#f6f6f6;"></div>
<div class="a" style="left:1043px;top:274px;width:1px;height:20px;background:#a2a2a2;"></div>
<div class="a" style="left:1044px;top:274px;width:1px;height:20px;background:#f6f6f6;"></div>
<div class="a" style="left:993px;top:304px;width:1px;height:20px;background:#a2a2a2;"></div>
<div class="a" style="left:994px;top:304px;width:1px;height:20px;background:#f6f6f6;"></div>
<div class="a" style="left:1013px;top:215px;width:90px;height:18px;background:#fff;border:1px solid #3b8fe4;box-sizing:border-box;"></div>
<span class="t" style="left:1017.0px;top:216.8px;font-size:11px;line-height:15px;color:#222;letter-spacing:-0.15px;">.13</span>
<div class="a" style="left:1033px;top:218px;width:1px;height:12px;background:#222;"></div>
<span class="t" style="left:989.0px;top:247.2px;font-size:11.5px;line-height:15px;color:#222;letter-spacing:-0.35px;">Profile</span>
<svg class="a" style="left:940px;top:200px;" width="200" height="140" viewBox="940 200 200 140"><polygon points="988,221 997,221 992.5,227" fill="#1e1e1e"/>
<polygon points="1027,251 1036,251 1031.5,257" fill="#1e1e1e"/>
<polygon points="988,281 997,281 992.5,287" fill="#1e1e1e"/>
<polygon points="1028,281 1037,281 1032.5,287" fill="#1e1e1e"/>
<polygon points="1068,281 1077,281 1072.5,287" fill="#1e1e1e"/>
<polygon points="1056,311 1065,311 1060.5,317" fill="#1e1e1e"/>
<polygon points="1107,219 1113.5,224 1107,229" fill="#1e1e1e"/>
<path d="M968.7,216 V232 M984.3,216 V232" stroke="#1b2b52" stroke-width="1.6"/><path d="M970,224 H983 M973,221.2 L970.2,224 L973,226.8 M980,221.2 L982.8,224 L980,226.8" stroke="#1b2b52" stroke-width="1.1" fill="none"/>
<rect x="969.5" y="247.5" width="13" height="13" fill="none" stroke="#2c6a2c" stroke-width="1.1" stroke-dasharray="5 3"/>
<rect x="968" y="246" width="3" height="3" fill="#2c6a2c"/>
<rect x="981" y="246" width="3" height="3" fill="#2c6a2c"/>
<rect x="968" y="259" width="3" height="3" fill="#2c6a2c"/>
<path d="M979,251 L979,261 L981.5,259 L983.3,262.6 L984.8,261.8 L983.2,258.4 L986,258 Z" fill="#fff" stroke="#111" stroke-width="0.8"/>
<path d="M969.5,279.5 L973,276.5 L984.5,276.5 L984.5,288 L981,291.5 L969.5,291.5 Z" fill="#eef0f3" stroke="#27395c" stroke-width="1"/><path d="M969.5,279.5 H981 V291.5 M981,279.5 L984.5,276.5" fill="none" stroke="#27395c" stroke-width="0.9"/><rect x="970.3" y="280.3" width="10" height="10.5" fill="#dfe2e8"/>
<rect x="1011.5" y="276.5" width="10" height="8" fill="#fff" stroke="#2d58b0" stroke-width="1"/><rect x="1008.5" y="283.5" width="16" height="8" fill="#bcd2f2" stroke="#2d58b0" stroke-width="1"/>
<polygon points="1049.5,277 1062,283 1062,292 1049.5,286" fill="#f6ad6a" stroke="#c8691c" stroke-width="0.9"/><path d="M1058,283.5 L1065,276.5 M1061.5,276 H1065.5 V280" stroke="#1a1a1a" stroke-width="1.4" fill="none"/>
<path d="M971,314 L975.5,318.5 L983.5,309.5" fill="none" stroke="#1c7a1c" stroke-width="2.2"/>
<path d="M1000.5,309 L1011.5,319.5 M1011.5,309 L1000.5,319.5" stroke="#cc1f1f" stroke-width="1.9"/>
<rect x="1037.5" y="306.5" width="15" height="15" fill="#fff" stroke="#333" stroke-width="1"/><rect x="1037.5" y="306.5" width="15" height="3" fill="#555"/><rect x="1039.5" y="311.5" width="2.5" height="2.5" fill="#cfe0ff" stroke="#2a4ea8" stroke-width="0.7"/><rect x="1039.5" y="316.5" width="2.5" height="2.5" fill="#fff" stroke="#444" stroke-width="0.7"/><path d="M1044,313 H1051" stroke="#2a4ea8" stroke-width="1"/><path d="M1044,318 H1051" stroke="#777" stroke-width="1"/></svg>
<svg class="a" style="left:1266px;top:140px;" width="100" height="120" viewBox="1266 140 100 120"><rect x="1313.5" y="152.5" width="11" height="3" fill="#fff" stroke="#444" stroke-width="1"/>
<rect x="1336.5" y="146.5" width="7" height="8" fill="#fff" stroke="#444" stroke-width="1"/><rect x="1333.500" y="148.500" width="8" height="8" fill="#fff" stroke="#444" stroke-width="1"/><rect x="1336.5" y="151.5" width="2.5" height="3" fill="none" stroke="#444" stroke-width="0.9"/>
<path d="M1354.5,148.5 L1363,156 M1363,148.500 L1354.5,156" stroke="#444" stroke-width="4.2"/><path d="M1354.5,148.500 L1363,156 M1363,148.500 L1354.5,156" stroke="#fff" stroke-width="2"/>
<defs><radialGradient id="gCs" cx="0.5" cy="0.5" r="0.5"><stop offset="0" stop-color="#bbb" stop-opacity="0.6"/><stop offset="1" stop-color="#bbb" stop-opacity="0"/></radialGradient></defs>
<ellipse cx="1320" cy="240" rx="26" ry="9" fill="url(#gCs)"/>
<polygon points="1319,183 1346,194.5 1320,208 1292,194.5" fill="#f1f1f1" stroke="#8c8c8c" stroke-width="0.8"/>
<polygon points="1292,194.5 1320,208 1320,241 1295,224.5" fill="#e9e9e9" stroke="#8c8c8c" stroke-width="0.8"/>
<polygon points="1320,208 1346,194.5 1343,224.5 1320,241" fill="#ededed" stroke="#8c8c8c" stroke-width="0.8"/>
<text x="0" y="0" font-size="6.5" fill="#999" font-family="Liberation Sans,sans-serif" transform="matrix(0.9,0.42,-0.75,0.45,1314,191)">TOP</text>
<text x="0" y="0" font-size="7" fill="#999" font-family="Liberation Sans,sans-serif" transform="matrix(0.86,0.46,0,1,1297,211)">FRONT</text>
<text x="0" y="0" font-size="7" fill="#999" font-family="Liberation Sans,sans-serif" transform="matrix(0.86,-0.48,0,1,1324,226)">RIGHT</text></svg>
<svg class="a" style="left:236px;top:590px;" width="66" height="60" viewBox="236 590 66 60"><line x1="267.3" y1="613" x2="267.3" y2="628" stroke="#1f8a1f" stroke-width="1.1"/>
<line x1="267.3" y1="628" x2="254" y2="635.500" stroke="#1b1b8c" stroke-width="1.1"/>
<line x1="267.3" y1="628" x2="281" y2="635.500" stroke="#8c1b1b" stroke-width="1.1"/>
<path d="M267.3,603 L272.5,611 Q272.5,614 267.3,614 Q262,614 262,611 Z" fill="#168a16"/>
<path d="M250,629.500 L257,633 L256.500,641 L246.500,638.500 Z" fill="#10109a"/>
<path d="M285,629.500 L278,633 L278.500,641 L289,638.500 Z" fill="#a01414"/></svg>
<span class="t" style="left:263.5px;top:591.8px;font-size:10.5px;line-height:14px;color:#33dd66;letter-spacing:0.50px;">Y</span>
<span class="t" style="left:239.5px;top:636.2px;font-size:10.5px;line-height:14px;color:#3434c8;letter-spacing:0.59px;">Z</span>
<span class="t" style="left:289.5px;top:636.2px;font-size:10.5px;line-height:14px;color:#ee2a3a;letter-spacing:0.50px;">X</span>
<div class="a" style="left:1318px;top:602px;width:48px;height:48px;background:#fafafa;border:1px solid #a9a9a9;box-sizing:border-box;"></div>
<svg class="a" style="left:1318px;top:602px;" width="48" height="48" viewBox="1318 602 48 48"><polygon points="1341.700,609.600 1356,617.500 1356,633.400 1341.700,641.300 1327.400,633.400 1327.400,617.500" fill="#3f97e6"/><polygon points="1341.700,609.600 1356,617.500 1341.700,625.500 1327.400,617.500" fill="#5aa9ee"/><polygon points="1341.700,625.500 1356,617.500 1356,633.400 1341.700,641.300" fill="#3186d8"/><path d="M1345.500,619.500 L1337,625.500 L1345.500,631.500" stroke="#fff" stroke-width="1.300" fill="none"/><circle cx="1345.500" cy="619.500" r="2.400" fill="#fff"/><circle cx="1337" cy="625.500" r="2.400" fill="#fff"/><circle cx="1345.500" cy="631.500" r="2.400" fill="#fff"/></svg>
<div class="a" style="left:215px;top:680px;width:1151px;height:24px;background:#606060;"></div>
<div class="a" style="left:0px;top:704px;width:1366px;height:24px;background:#f5f5f5;"></div>
<div class="a" style="left:0px;top:728px;width:1366px;height:1px;background:#111;"></div>
<svg class="a" style="left:215px;top:680px;" width="130" height="24" viewBox="215 680 130 24"><rect x="219.500" y="684.500" width="9" height="6" fill="none" stroke="#e6e6e6" stroke-width="1.200"/><rect x="222.500" y="688" width="9" height="6" fill="#606060" stroke="#e6e6e6" stroke-width="1.200"/><rect x="226" y="692" width="9" height="7" fill="#606060" stroke="#e6e6e6" stroke-width="1.200"/>
<rect x="243.5" y="685.5" width="6" height="5.500" fill="none" stroke="#e6e6e6" stroke-width="1.200"/>
<rect x="251.5" y="685.5" width="6" height="5.500" fill="none" stroke="#e6e6e6" stroke-width="1.200"/>
<rect x="243.5" y="693.5" width="6" height="5.500" fill="none" stroke="#e6e6e6" stroke-width="1.200"/>
<rect x="251.5" y="693.5" width="6" height="5.500" fill="none" stroke="#e6e6e6" stroke-width="1.200"/>
<rect x="267.500" y="685.500" width="15" height="5.500" fill="none" stroke="#e6e6e6" stroke-width="1.200"/><rect x="267.500" y="693.500" width="15" height="5.500" fill="none" stroke="#e6e6e6" stroke-width="1.200"/>
<rect x="291.500" y="685" width="6" height="14" fill="none" stroke="#e6e6e6" stroke-width="1.200"/><rect x="299.500" y="685" width="6" height="14" fill="none" stroke="#e6e6e6" stroke-width="1.200"/>
<polygon points="318,696 328,696 323,688" fill="#e6e6e6"/>
<rect x="335" y="680" width="1" height="24" fill="#8a8a8a"/></svg>
<span class="t" style="left:344.0px;top:683.8px;font-size:12.5px;line-height:16px;color:#e8e8e8;letter-spacing:-0.25px;">My Home</span>
<div class="a" style="left:408px;top:680px;width:63px;height:24px;background:#f5f5f5;"></div>
<span class="t" style="left:416.0px;top:683.8px;font-size:12.5px;line-height:16px;color:#444;letter-spacing:-1.22px;">Part1</span>
<svg class="a" style="left:448px;top:685px;" width="14" height="14" viewBox="0 0 14 14"><path d="M2.500,2.500 L10.500,10.500 M10.500,2.500 L2.500,10.500" stroke="#333" stroke-width="2"/></svg>
<span class="t" style="left:1.0px;top:708.8px;font-size:12.5px;line-height:16px;color:#1a1a1a;letter-spacing:-0.34px;">Select a feature or dimension</span>
<div class="a" style="left:1287px;top:706px;width:1px;height:21px;background:#d4d4d4;"></div>
<div class="a" style="left:1327px;top:706px;width:1px;height:21px;background:#d4d4d4;"></div>
<div class="a" style="left:1364px;top:706px;width:1px;height:21px;background:#d4d4d4;"></div>
<span class="t" style="left:1296.5px;top:708.8px;font-size:12.5px;line-height:16px;color:#1a1a1a;letter-spacing:0.00px;">1</span>
<span class="t" style="left:1334.5px;top:708.8px;font-size:12.5px;line-height:16px;color:#1a1a1a;letter-spacing:0.00px;">1</span>
</body></html>
